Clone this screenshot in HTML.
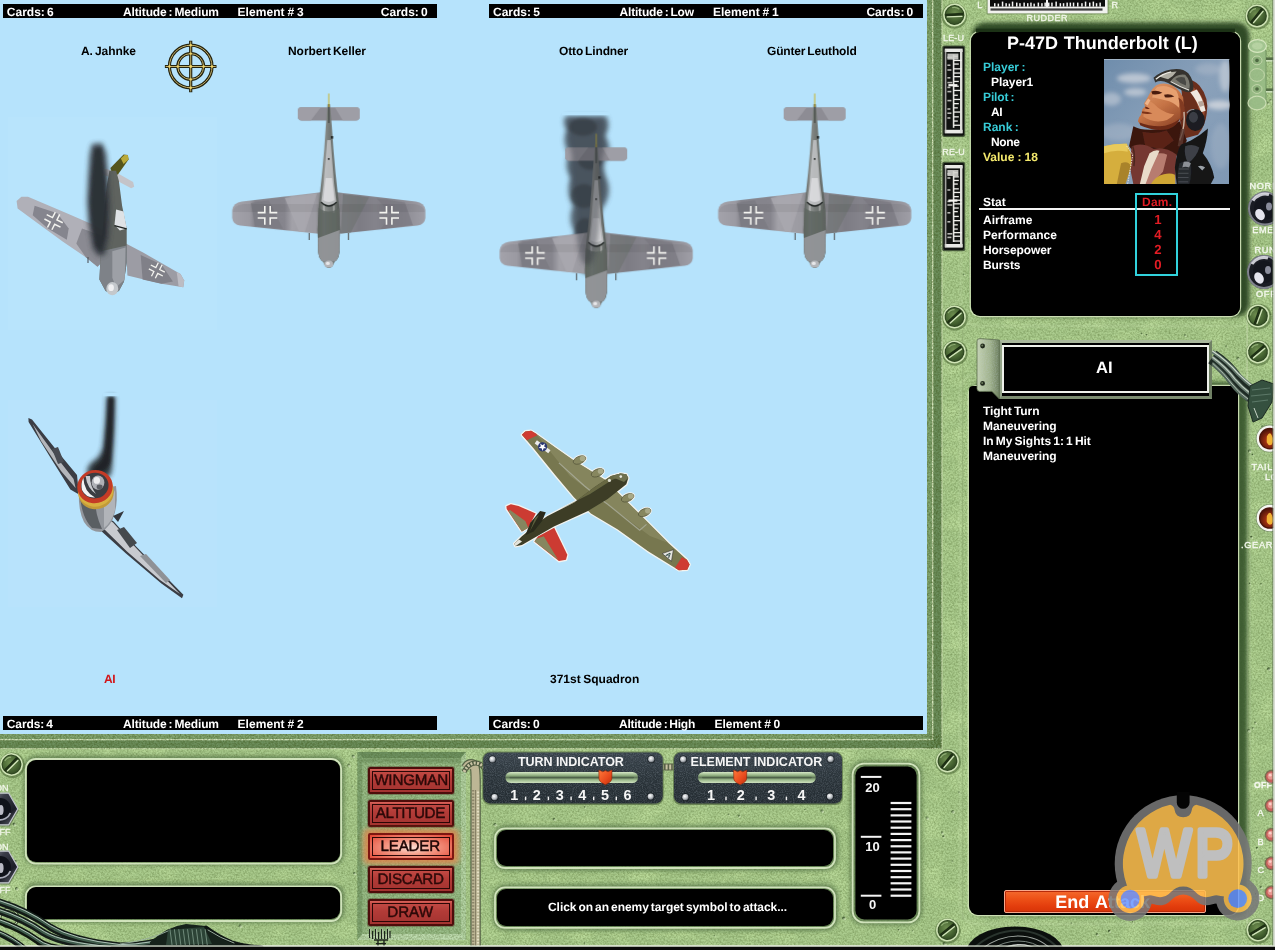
<!DOCTYPE html>
<html lang="en">
<head>
<meta charset="utf-8">
<title>Down in Flames - Attack</title>
<style>
html,body{margin:0;padding:0;background:#000;}
body{width:1275px;height:950px;overflow:hidden;font-family:"Liberation Sans",sans-serif;}
#root{position:relative;width:1275px;height:950px;overflow:hidden;background:#abcc8e;}
#root *{box-sizing:border-box;}
.abs{position:absolute;}
.bar,.name,.t,.btn,#endattack{will-change:transform;text-rendering:geometricPrecision;}
svg.layer{position:absolute;left:0;top:0;width:1275px;height:950px;pointer-events:none;}
/* ---------- sky / play field ---------- */
#sky{position:absolute;left:0;top:0;width:927px;height:734px;background:#b6e3fc;}
.bar{position:absolute;height:14px;background:#000;color:#fff;font-weight:bold;font-size:12px;line-height:14px;white-space:nowrap;}
.bar span{position:absolute;top:.6px;}
.name{position:absolute;font-weight:bold;font-size:12px;line-height:14px;color:#000;white-space:nowrap;}
/* ---------- screens ---------- */
.screen{position:absolute;background:#000;border-radius:9px;}
.t{position:absolute;font-weight:bold;font-size:12px;line-height:14px;white-space:nowrap;color:#fff;}
.cy{color:#37ccd8;}
.yl{color:#f3e86c;}
.rd{color:#e21c24;}
#endattack{border:1px solid #f9a88c;border-radius:2px;background:linear-gradient(#f46a2e 0,#ee5218 35%,#e23c0c 75%,#d63408 100%);box-shadow:inset 0 0 0 1px #b82a08;color:#fff;font-weight:bold;font-size:18px;line-height:21px;}
/* ---------- buttons ---------- */
.btn{position:absolute;left:368px;width:86px;height:27px;border:2px solid #4d0d0b;border-radius:2px;background:linear-gradient(#d9635a 0,#c24a44 12%,#b23b37 45%,#a33330 100%);color:#2c0908;font-size:15.2px;line-height:23px;-webkit-text-stroke:.45px #2c0908;box-shadow:0 0 0 1px rgba(70,40,30,.35);}
.btn i{position:absolute;left:2px;top:2px;right:2px;bottom:2px;border:1.4px solid #2a0706;}
.btn b{position:absolute;top:0;font-weight:normal;white-space:nowrap;}
.btn.on{background:radial-gradient(ellipse at 50% 55%,#fde0d6 0%,#f59a86 40%,#e2422f 100%);border-color:#7d1611;color:#1c0504;-webkit-text-stroke:.45px #1c0504;box-shadow:0 0 6px 3px rgba(226,120,60,.7);}
</style>
</head>
<body>
<div id="root">
<!-- =================== PLAY FIELD =================== -->
<div id="sky"></div>
<svg class="layer" id="gfx-bg" viewBox="0 0 1275 950">
<defs>
  <filter id="grain" x="0" y="0" width="100%" height="100%" color-interpolation-filters="sRGB">
    <feTurbulence type="fractalNoise" baseFrequency="0.55" numOctaves="3" seed="7" result="n"/>
    <feColorMatrix type="matrix" values="0 0 0 0 0.26  0 0 0 0 0.36  0 0 0 0 0.13  1.9 0 0 0 -0.62"/>
  </filter>
  <filter id="grainL" x="0" y="0" width="100%" height="100%" color-interpolation-filters="sRGB">
    <feTurbulence type="fractalNoise" baseFrequency="0.035 0.05" numOctaves="3" seed="21" result="n"/>
    <feColorMatrix type="matrix" values="0 0 0 0 0.80  0 0 0 0 0.92  0 0 0 0 0.66  0 2.2 0 0 -0.95"/>
  </filter>
  <filter id="b1"><feGaussianBlur stdDeviation="1"/></filter>
  <filter id="b2"><feGaussianBlur stdDeviation="2"/></filter>
  <filter id="b3"><feGaussianBlur stdDeviation="3.2"/></filter>
  <filter id="b05"><feGaussianBlur stdDeviation="0.5"/></filter>
  <radialGradient id="screwG" cx="0.42" cy="0.4" r="0.7">
    <stop offset="0" stop-color="#6f8e50"/><stop offset="0.55" stop-color="#4c6a36"/><stop offset="1" stop-color="#2e4620"/>
  </radialGradient>
  <g id="screw">
    <circle r="12.8" fill="#46622f" opacity=".55" transform="translate(.6 .8)"/>
    <circle r="11.4" fill="#d0e4b6"/>
    <circle r="9.9" fill="#2e4620"/>
    <circle r="8.9" fill="url(#screwG)"/>
    <path d="M-5.4,6 L4.6,-6.4" stroke="#1e3014" stroke-width="2.6" stroke-linecap="round"/>
    <path d="M-3.4,6.6 L6,-4.6" stroke="#d8eac0" stroke-width="1.4" stroke-linecap="round" opacity=".95"/>
    <path d="M-7,-3 A7.6,7.6 0 0 1 -1,-7.4" stroke="#a9c68c" stroke-width="1.2" fill="none" opacity=".7"/>
  </g>
  <linearGradient id="bevV" x1="0" y1="0" x2="0" y2="1">
    <stop offset="0" stop-color="#6f8a58"/><stop offset="1" stop-color="#d4e6bc"/>
  </linearGradient>
  <radialGradient id="knobG" cx="0.4" cy="0.38" r="0.65">
    <stop offset="0" stop-color="#1a1c26"/><stop offset="0.55" stop-color="#22242e"/><stop offset="0.8" stop-color="#8a8c98"/><stop offset="1" stop-color="#2a2c36"/>
  </radialGradient>
  <radialGradient id="lampG" cx="0.5" cy="0.6" r="0.6">
    <stop offset="0" stop-color="#e08828"/><stop offset="0.35" stop-color="#a03010"/><stop offset="1" stop-color="#4a130a"/>
  </radialGradient>
</defs>

<!-- base panel colour + texture -->
<rect x="0" y="0" width="1275" height="950" fill="#abcc8e"/>
<rect x="0" y="0" width="1275" height="950" filter="url(#grainL)" opacity=".55"/>
<rect x="0" y="0" width="1275" height="950" filter="url(#grain)" opacity=".36"/>

<!-- sky (repeated so the svg can sit above the html sky) -->
<rect x="0" y="0" width="927" height="734" fill="#b6e3fc"/>
<rect x="8" y="117" width="209" height="213" fill="#bfe7fd" opacity=".32"/>
<rect x="8" y="400" width="209" height="207" fill="#bfe7fd" opacity=".24"/>

<!-- frame around play field -->
<g>
  <rect x="927" y="0" width="15" height="749" fill="#84a672"/>
  <rect x="0" y="734" width="942" height="15" fill="#84a672"/>
  <rect x="933.4" y="0" width="8" height="748" fill="#6c8e5c"/>
  <rect x="0" y="740" width="941" height="8" fill="#6c8e5c"/>
  <rect x="932" y="0" width="1.3" height="740" fill="#d6e6be"/>
  <rect x="0" y="739" width="933" height="1.3" fill="#d6e6be"/>
  <rect x="941.3" y="0" width="1.2" height="749" fill="#c2d6a8"/>
  <rect x="0" y="748" width="942" height="1.2" fill="#c2d6a8"/>
  <rect x="927" y="0" width="15" height="749" filter="url(#grain)" opacity=".6"/>
  <rect x="0" y="734" width="942" height="15" filter="url(#grain)" opacity=".6"/>
</g>

<!-- vertical ridge lines on right panel -->
<rect x="1246.5" y="30" width="1.2" height="900" fill="#c9dcb0" opacity=".7"/>
<rect x="962" y="330" width="1.2" height="590" fill="#8aa66e" opacity=".5"/>

<!-- recessed bevels for the screens -->
<g fill="none">
  <!-- info screen -->
  <rect x="961" y="21" width="290" height="305" rx="17" stroke="#c8e0ae" stroke-width="2" opacity=".3" filter="url(#b1)"/>
  <rect x="972" y="22.5" width="277.5" height="294" rx="13" fill="#2a4420" filter="url(#b2)" opacity=".95"/>
  <rect x="970.2" y="31.4" width="270.4" height="285.2" rx="9.6" stroke="#d6e8be" stroke-width="1.2" opacity=".9"/>
  <rect x="976" y="28.6" width="259" height="4" fill="#1c3016" filter="url(#b05)"/>
  <!-- log screen -->
  <rect id="logrim" x="960" y="374" width="290" height="550" rx="17" stroke="#c8e0ae" stroke-width="2" opacity=".3" filter="url(#b1)"/>
  <rect x="972" y="382" width="275.5" height="534" rx="12" fill="#36522c" filter="url(#b2)" opacity=".9"/>
  <rect x="968.2" y="385.4" width="270.4" height="530.2" rx="9.6" stroke="#d6e8be" stroke-width="1.2" opacity=".9"/>
  <!-- bottom left screens -->
  <rect x="24" y="756" width="320" height="109" rx="12" fill="#4d6b40" filter="url(#b2)" opacity=".75"/>
  <rect x="25.8" y="759" width="315.4" height="104.6" rx="10" stroke="#dcecc6" stroke-width="1.8" opacity=".9"/>
  <rect x="24" y="883.6" width="320" height="39" rx="12" fill="#4d6b40" filter="url(#b2)" opacity=".75"/>
  <rect x="25.8" y="886.4" width="315.4" height="34.6" rx="10" stroke="#dcecc6" stroke-width="1.8" opacity=".9"/>
  <!-- bottom centre screens -->
  <rect x="493" y="825.6" width="345" height="45" rx="13" fill="#4d6b40" filter="url(#b2)" opacity=".75"/>
  <rect x="495" y="828.4" width="340" height="39.6" rx="10" stroke="#dcecc6" stroke-width="1.8" opacity=".9"/>
  <rect x="493" y="884.6" width="345" height="46" rx="13" fill="#4d6b40" filter="url(#b2)" opacity=".75"/>
  <rect x="495" y="887.4" width="340" height="40.4" rx="10" stroke="#dcecc6" stroke-width="1.8" opacity=".9"/>
  <!-- right gauge -->
  <rect x="850" y="761" width="72" height="164" rx="14" fill="#4d6b40" filter="url(#b2)" opacity=".7"/>
  <rect x="852.6" y="763.6" width="66.8" height="158.8" rx="11.4" stroke="#dcecc6" stroke-width="1.8" opacity=".9"/>
</g>

<!-- button well -->
<g>
  <rect x="357.5" y="752" width="108.5" height="188" fill="#8fb27e"/>
  <path d="M357.5,752 h108.5 l-5,6 h-98.5 z" fill="#6d9060"/>
  <path d="M357.5,752 v188 l5,-6 v-176 z" fill="#7fa270"/>
  <path d="M466,752 v188 l-5,-6 v-176 z" fill="#b4d3a4"/>
  <path d="M357.5,940 h108.5 l-5,-6 h-98.5 z" fill="#bddaae"/>
  <rect x="362.5" y="758" width="98.5" height="176" fill="#98bb87"/>
  <rect x="362.5" y="758" width="98.5" height="5" fill="#5f8052" opacity=".45" filter="url(#b1)"/>
  <rect x="357.5" y="752" width="108.5" height="188" filter="url(#grain)" opacity=".4"/>
  <rect x="363" y="829" width="96" height="35" rx="4" fill="#d9a06a" opacity=".55" filter="url(#b2)"/>
</g>

<!-- specks -->
<g>
<circle cx="348.6" cy="765.0" r="1.5" fill="#2c4420" opacity="0.5"/><circle cx="349.5" cy="766.1" r="1.4" fill="#dff0c8" opacity=".55"/>
<circle cx="1255.6" cy="893.7" r="0.7" fill="#2c4420" opacity="0.75"/><circle cx="1256.5" cy="894.8" r="0.6" fill="#dff0c8" opacity=".55"/>
<circle cx="1037.6" cy="378.1" r="1.2" fill="#2c4420" opacity="0.75"/><circle cx="1038.5" cy="379.2" r="1.1" fill="#dff0c8" opacity=".55"/>
<circle cx="952.1" cy="861.0" r="0.7" fill="#2c4420" opacity="0.6"/><circle cx="953.0" cy="862.1" r="0.6" fill="#dff0c8" opacity=".55"/>
<circle cx="1226.1" cy="346.0" r="0.8" fill="#2c4420" opacity="0.75"/><circle cx="1227.0" cy="347.1" r="0.7" fill="#dff0c8" opacity=".55"/>
<circle cx="584.7" cy="806.9" r="0.8" fill="#2c4420" opacity="0.6"/><circle cx="585.6" cy="808.0" r="0.7" fill="#dff0c8" opacity=".55"/>
<circle cx="843.7" cy="918.0" r="1.5" fill="#2c4420" opacity="0.75"/><circle cx="844.6" cy="919.1" r="1.4" fill="#dff0c8" opacity=".55"/>
<circle cx="494.9" cy="824.2" r="1.5" fill="#2c4420" opacity="0.6"/><circle cx="495.8" cy="825.3" r="1.4" fill="#dff0c8" opacity=".55"/>
<circle cx="1012.6" cy="357.2" r="1.2" fill="#2c4420" opacity="0.75"/><circle cx="1013.5" cy="358.3" r="1.1" fill="#dff0c8" opacity=".55"/>
<circle cx="952.7" cy="811.4" r="1.5" fill="#2c4420" opacity="0.6"/><circle cx="953.6" cy="812.5" r="1.4" fill="#dff0c8" opacity=".55"/>
<circle cx="1248.5" cy="730.2" r="1.5" fill="#2c4420" opacity="0.5"/><circle cx="1249.4" cy="731.3" r="1.4" fill="#dff0c8" opacity=".55"/>
<circle cx="354.3" cy="873.1" r="1.2" fill="#2c4420" opacity="0.6"/><circle cx="355.2" cy="874.2" r="1.1" fill="#dff0c8" opacity=".55"/>
<circle cx="958.9" cy="792.1" r="0.8" fill="#2c4420" opacity="0.6"/><circle cx="959.8" cy="793.2" r="0.7" fill="#dff0c8" opacity=".55"/>
<circle cx="1255.1" cy="722.4" r="1" fill="#2c4420" opacity="0.5"/><circle cx="1256.0" cy="723.5" r="0.9" fill="#dff0c8" opacity=".55"/>
<circle cx="1096.9" cy="934.2" r="1.2" fill="#2c4420" opacity="0.6"/><circle cx="1097.8" cy="935.3" r="1.1" fill="#dff0c8" opacity=".55"/>
<circle cx="1030.0" cy="934.1" r="1" fill="#2c4420" opacity="0.5"/><circle cx="1030.9" cy="935.2" r="0.9" fill="#dff0c8" opacity=".55"/>
<circle cx="1066.8" cy="358.7" r="1.5" fill="#2c4420" opacity="0.6"/><circle cx="1067.7" cy="359.8" r="1.4" fill="#dff0c8" opacity=".55"/>
<circle cx="1077.5" cy="351.7" r="0.8" fill="#2c4420" opacity="0.5"/><circle cx="1078.4" cy="352.8" r="0.7" fill="#dff0c8" opacity=".55"/>
<circle cx="1141.4" cy="333.4" r="0.8" fill="#2c4420" opacity="0.6"/><circle cx="1142.3" cy="334.5" r="0.7" fill="#dff0c8" opacity=".55"/>
<circle cx="1185.0" cy="335.1" r="1" fill="#2c4420" opacity="0.5"/><circle cx="1185.9" cy="336.2" r="0.9" fill="#dff0c8" opacity=".55"/>
<circle cx="945.1" cy="938.0" r="1" fill="#2c4420" opacity="0.6"/><circle cx="946.0" cy="939.1" r="0.9" fill="#dff0c8" opacity=".55"/>
<circle cx="898.4" cy="929.7" r="0.8" fill="#2c4420" opacity="0.75"/><circle cx="899.3" cy="930.8" r="0.7" fill="#dff0c8" opacity=".55"/>
<circle cx="912.3" cy="930.6" r="0.7" fill="#2c4420" opacity="0.5"/><circle cx="913.2" cy="931.7" r="0.6" fill="#dff0c8" opacity=".55"/>
<circle cx="1264.9" cy="530.5" r="0.8" fill="#2c4420" opacity="0.5"/><circle cx="1265.8" cy="531.6" r="0.7" fill="#dff0c8" opacity=".55"/>
<circle cx="1071.3" cy="923.0" r="0.7" fill="#2c4420" opacity="0.5"/><circle cx="1072.2" cy="924.1" r="0.6" fill="#dff0c8" opacity=".55"/>
<circle cx="966.4" cy="350.3" r="1" fill="#2c4420" opacity="0.75"/><circle cx="967.3" cy="351.4" r="0.9" fill="#dff0c8" opacity=".55"/>
<circle cx="996.3" cy="350.8" r="1" fill="#2c4420" opacity="0.6"/><circle cx="997.2" cy="351.9" r="0.9" fill="#dff0c8" opacity=".55"/>
<circle cx="1270.2" cy="99.9" r="1" fill="#2c4420" opacity="0.5"/><circle cx="1271.1" cy="101.0" r="0.9" fill="#dff0c8" opacity=".55"/>
<circle cx="1165.5" cy="370.8" r="1.2" fill="#2c4420" opacity="0.75"/><circle cx="1166.4" cy="371.9" r="1.1" fill="#dff0c8" opacity=".55"/>
<circle cx="213.9" cy="934.3" r="1.2" fill="#2c4420" opacity="0.6"/><circle cx="214.8" cy="935.4" r="1.1" fill="#dff0c8" opacity=".55"/>
<circle cx="1249.5" cy="583.2" r="0.7" fill="#2c4420" opacity="0.75"/><circle cx="1250.4" cy="584.3" r="0.6" fill="#dff0c8" opacity=".55"/>
<circle cx="1089.3" cy="347.1" r="0.8" fill="#2c4420" opacity="0.6"/><circle cx="1090.2" cy="348.2" r="0.7" fill="#dff0c8" opacity=".55"/>
<circle cx="51.8" cy="928.0" r="0.7" fill="#2c4420" opacity="0.5"/><circle cx="52.7" cy="929.1" r="0.6" fill="#dff0c8" opacity=".55"/>
<circle cx="1109.1" cy="930.9" r="1.2" fill="#2c4420" opacity="0.75"/><circle cx="1110.0" cy="932.0" r="1.1" fill="#dff0c8" opacity=".55"/>
<circle cx="1253.1" cy="468.7" r="0.8" fill="#2c4420" opacity="0.6"/><circle cx="1254.0" cy="469.8" r="0.7" fill="#dff0c8" opacity=".55"/>
<circle cx="1251.5" cy="20.1" r="1.5" fill="#2c4420" opacity="0.5"/><circle cx="1252.4" cy="21.2" r="1.4" fill="#dff0c8" opacity=".55"/>
<circle cx="980.5" cy="350.1" r="1.5" fill="#2c4420" opacity="0.6"/><circle cx="981.4" cy="351.2" r="1.4" fill="#dff0c8" opacity=".55"/>
<circle cx="353.0" cy="756.0" r="1.5" fill="#2c4420" opacity="0.6"/><circle cx="353.9" cy="757.1" r="1.4" fill="#dff0c8" opacity=".55"/>
<circle cx="1018.1" cy="922.6" r="0.7" fill="#2c4420" opacity="0.6"/><circle cx="1019.0" cy="923.7" r="0.6" fill="#dff0c8" opacity=".55"/>
<circle cx="14.1" cy="823.9" r="1.5" fill="#2c4420" opacity="0.75"/><circle cx="15.0" cy="825.0" r="1.4" fill="#dff0c8" opacity=".55"/>
<circle cx="584.5" cy="943.0" r="0.8" fill="#2c4420" opacity="0.6"/><circle cx="585.4" cy="944.1" r="0.7" fill="#dff0c8" opacity=".55"/>
<circle cx="16.5" cy="888.4" r="1.5" fill="#2c4420" opacity="0.75"/><circle cx="17.4" cy="889.5" r="1.4" fill="#dff0c8" opacity=".55"/>
<circle cx="9.4" cy="902.2" r="1.5" fill="#2c4420" opacity="0.6"/><circle cx="10.3" cy="903.3" r="1.4" fill="#dff0c8" opacity=".55"/>
<circle cx="1146.4" cy="334.8" r="0.8" fill="#2c4420" opacity="0.75"/><circle cx="1147.3" cy="335.9" r="0.7" fill="#dff0c8" opacity=".55"/>
<circle cx="29.0" cy="934.5" r="0.7" fill="#2c4420" opacity="0.6"/><circle cx="29.9" cy="935.6" r="0.6" fill="#dff0c8" opacity=".55"/>
<circle cx="1270.1" cy="409.5" r="1" fill="#2c4420" opacity="0.6"/><circle cx="1271.0" cy="410.6" r="0.9" fill="#dff0c8" opacity=".55"/>
<circle cx="476.7" cy="824.0" r="1.5" fill="#2c4420" opacity="0.6"/><circle cx="477.6" cy="825.1" r="1.4" fill="#dff0c8" opacity=".55"/>
<circle cx="1256.9" cy="847.8" r="1" fill="#2c4420" opacity="0.75"/><circle cx="1257.8" cy="848.9" r="0.9" fill="#dff0c8" opacity=".55"/>
<circle cx="1252.6" cy="20.5" r="1.2" fill="#2c4420" opacity="0.6"/><circle cx="1253.5" cy="21.6" r="1.1" fill="#dff0c8" opacity=".55"/>
<circle cx="1268.6" cy="668.7" r="1.5" fill="#2c4420" opacity="0.75"/><circle cx="1269.5" cy="669.8" r="1.4" fill="#dff0c8" opacity=".55"/>
<circle cx="943.2" cy="836.2" r="1" fill="#2c4420" opacity="0.75"/><circle cx="944.1" cy="837.3" r="0.9" fill="#dff0c8" opacity=".55"/>
<circle cx="728.4" cy="814.2" r="0.8" fill="#2c4420" opacity="0.6"/><circle cx="729.3" cy="815.3" r="0.7" fill="#dff0c8" opacity=".55"/>
<circle cx="1262.1" cy="426.3" r="1" fill="#2c4420" opacity="0.6"/><circle cx="1263.0" cy="427.4" r="0.9" fill="#dff0c8" opacity=".55"/>
<circle cx="1015.2" cy="355.8" r="1" fill="#2c4420" opacity="0.5"/><circle cx="1016.1" cy="356.9" r="0.9" fill="#dff0c8" opacity=".55"/>
<circle cx="1249.4" cy="450.8" r="1.5" fill="#2c4420" opacity="0.6"/><circle cx="1250.3" cy="451.9" r="1.4" fill="#dff0c8" opacity=".55"/>
<circle cx="1260.8" cy="887.1" r="1.2" fill="#2c4420" opacity="0.6"/><circle cx="1261.7" cy="888.2" r="1.1" fill="#dff0c8" opacity=".55"/>
<circle cx="987.5" cy="379.2" r="1.2" fill="#2c4420" opacity="0.5"/><circle cx="988.4" cy="380.3" r="1.1" fill="#dff0c8" opacity=".55"/>
<circle cx="201.7" cy="940.3" r="1.5" fill="#2c4420" opacity="0.75"/><circle cx="202.6" cy="941.4" r="1.4" fill="#dff0c8" opacity=".55"/>
<circle cx="1270.1" cy="314.3" r="0.7" fill="#2c4420" opacity="0.75"/><circle cx="1271.0" cy="315.4" r="0.6" fill="#dff0c8" opacity=".55"/>
<circle cx="204.9" cy="936.3" r="0.7" fill="#2c4420" opacity="0.5"/><circle cx="205.8" cy="937.4" r="0.6" fill="#dff0c8" opacity=".55"/>
<circle cx="15.3" cy="861.6" r="1.5" fill="#2c4420" opacity="0.75"/><circle cx="16.2" cy="862.7" r="1.4" fill="#dff0c8" opacity=".55"/>
<circle cx="1037.7" cy="944.0" r="0.7" fill="#2c4420" opacity="0.6"/><circle cx="1038.6" cy="945.1" r="0.6" fill="#dff0c8" opacity=".55"/>
<circle cx="1261.0" cy="583.8" r="0.8" fill="#2c4420" opacity="0.6"/><circle cx="1261.9" cy="584.9" r="0.7" fill="#dff0c8" opacity=".55"/>
<circle cx="927.0" cy="817.7" r="1.5" fill="#2c4420" opacity="0.5"/><circle cx="927.9" cy="818.8" r="1.4" fill="#dff0c8" opacity=".55"/>
<circle cx="1237.9" cy="358.3" r="1.5" fill="#2c4420" opacity="0.6"/><circle cx="1238.8" cy="359.4" r="1.4" fill="#dff0c8" opacity=".55"/>
<circle cx="714.2" cy="935.7" r="0.7" fill="#2c4420" opacity="0.5"/><circle cx="715.1" cy="936.8" r="0.6" fill="#dff0c8" opacity=".55"/>
<circle cx="553.9" cy="819.0" r="1.2" fill="#2c4420" opacity="0.6"/><circle cx="554.8" cy="820.1" r="1.1" fill="#dff0c8" opacity=".55"/>
<circle cx="1252.3" cy="454.4" r="0.8" fill="#2c4420" opacity="0.75"/><circle cx="1253.2" cy="455.5" r="0.7" fill="#dff0c8" opacity=".55"/>
<circle cx="804.8" cy="809.4" r="0.7" fill="#2c4420" opacity="0.6"/><circle cx="805.7" cy="810.5" r="0.6" fill="#dff0c8" opacity=".55"/>
<circle cx="944.1" cy="943.5" r="1.5" fill="#2c4420" opacity="0.75"/><circle cx="945.0" cy="944.6" r="1.4" fill="#dff0c8" opacity=".55"/>
<circle cx="1258.3" cy="40.6" r="1" fill="#2c4420" opacity="0.5"/><circle cx="1259.2" cy="41.7" r="0.9" fill="#dff0c8" opacity=".55"/>
<circle cx="1251.5" cy="96.8" r="1.2" fill="#2c4420" opacity="0.5"/><circle cx="1252.4" cy="97.9" r="1.1" fill="#dff0c8" opacity=".55"/>
<circle cx="1267.6" cy="469.7" r="0.7" fill="#2c4420" opacity="0.5"/><circle cx="1268.5" cy="470.8" r="0.6" fill="#dff0c8" opacity=".55"/>
<circle cx="352.2" cy="786.1" r="0.7" fill="#2c4420" opacity="0.75"/><circle cx="353.1" cy="787.2" r="0.6" fill="#dff0c8" opacity=".55"/>
<circle cx="1260.3" cy="189.5" r="0.8" fill="#2c4420" opacity="0.75"/><circle cx="1261.2" cy="190.6" r="0.7" fill="#dff0c8" opacity=".55"/>
<circle cx="240.0" cy="925.7" r="1.5" fill="#2c4420" opacity="0.6"/><circle cx="240.9" cy="926.8" r="1.4" fill="#dff0c8" opacity=".55"/>
<circle cx="738.9" cy="815.7" r="1.2" fill="#2c4420" opacity="0.5"/><circle cx="739.8" cy="816.8" r="1.1" fill="#dff0c8" opacity=".55"/>
<circle cx="1130.6" cy="370.7" r="0.7" fill="#2c4420" opacity="0.5"/><circle cx="1131.5" cy="371.8" r="0.6" fill="#dff0c8" opacity=".55"/>
<circle cx="960.7" cy="314.1" r="1.2" fill="#2c4420" opacity="0.6"/><circle cx="961.6" cy="315.2" r="1.1" fill="#dff0c8" opacity=".55"/>
<circle cx="1132.5" cy="921.8" r="0.7" fill="#2c4420" opacity="0.5"/><circle cx="1133.4" cy="922.9" r="0.6" fill="#dff0c8" opacity=".55"/>
<circle cx="942.0" cy="832.5" r="1.2" fill="#2c4420" opacity="0.5"/><circle cx="942.9" cy="833.6" r="1.1" fill="#dff0c8" opacity=".55"/>
<circle cx="1108.3" cy="348.5" r="1.5" fill="#2c4420" opacity="0.75"/><circle cx="1109.2" cy="349.6" r="1.4" fill="#dff0c8" opacity=".55"/>
<circle cx="1251.2" cy="536.8" r="1" fill="#2c4420" opacity="0.75"/><circle cx="1252.1" cy="537.9" r="0.9" fill="#dff0c8" opacity=".55"/>
<circle cx="476.2" cy="850.0" r="1.5" fill="#2c4420" opacity="0.6"/><circle cx="477.1" cy="851.1" r="1.4" fill="#dff0c8" opacity=".55"/>
<circle cx="821.9" cy="810.7" r="1.5" fill="#2c4420" opacity="0.6"/><circle cx="822.8" cy="811.8" r="1.4" fill="#dff0c8" opacity=".55"/>
<circle cx="1252.6" cy="727.9" r="1" fill="#2c4420" opacity="0.5"/><circle cx="1253.5" cy="729.0" r="0.9" fill="#dff0c8" opacity=".55"/>
<circle cx="963.7" cy="274.3" r="0.8" fill="#2c4420" opacity="0.5"/><circle cx="964.6" cy="275.4" r="0.7" fill="#dff0c8" opacity=".55"/>
<circle cx="476.1" cy="843.8" r="1.5" fill="#2c4420" opacity="0.75"/><circle cx="477.0" cy="844.9" r="1.4" fill="#dff0c8" opacity=".55"/>
<circle cx="1267.8" cy="102.8" r="1.2" fill="#2c4420" opacity="0.5"/><circle cx="1268.7" cy="103.9" r="1.1" fill="#dff0c8" opacity=".55"/>
<circle cx="184.8" cy="942.6" r="1.2" fill="#2c4420" opacity="0.5"/><circle cx="185.7" cy="943.7" r="1.1" fill="#dff0c8" opacity=".55"/>
</g>

<!-- screws -->
<use href="#screw" transform="translate(954.5 15) rotate(48)"/>
<use href="#screw" transform="translate(1257 16) rotate(0)"/>
<use href="#screw" transform="translate(954.5 317) rotate(8)"/>
<use href="#screw" transform="translate(1258 316) rotate(-20)"/>
<use href="#screw" transform="translate(954.5 352) rotate(15)"/>
<use href="#screw" transform="translate(1258 352) rotate(10)"/>
<use href="#screw" transform="translate(947.5 761) rotate(0)"/>
<use href="#screw" transform="translate(947.5 930) rotate(12)"/>
<use href="#screw" transform="translate(1258 930) rotate(20)"/>
<use href="#screw" transform="translate(11.5 764.5) rotate(5)"/>

<!-- bottom border -->
<rect x="0" y="945.4" width="1275" height="1.4" fill="#e8eee0"/>
<rect x="0" y="946.8" width="1275" height="3.2" fill="#0a0a0a"/>

</svg>
<div class="bar" style="left:3px;top:4px;width:434px;"><span style="left:3.8px;word-spacing:-1.20px;">Cards: 6</span><span style="left:120.0px;letter-spacing:-0.14px;word-spacing:-1.20px;">Altitude : Medium</span><span style="left:234.4px;letter-spacing:0.08px;word-spacing:-0.60px;">Element # 3</span><span style="left:377.8px;word-spacing:-1.20px;">Cards: 0</span></div>
<div class="bar" style="left:489px;top:4px;width:434px;"><span style="left:4.0px;word-spacing:-1.20px;">Cards: 5</span><span style="left:130.5px;letter-spacing:-0.18px;word-spacing:-1.20px;">Altitude : Low</span><span style="left:224.0px;word-spacing:-0.50px;">Element # 1</span><span style="left:377.4px;word-spacing:-1.20px;">Cards: 0</span></div>
<div class="bar" style="left:3px;top:716px;width:434px;"><span style="left:3.8px;letter-spacing:-0.11px;word-spacing:-1.20px;">Cards: 4</span><span style="left:120.0px;letter-spacing:-0.14px;word-spacing:-1.20px;">Altitude : Medium</span><span style="left:234.4px;letter-spacing:0.08px;word-spacing:-0.60px;">Element # 2</span></div>
<div class="bar" style="left:489px;top:716px;width:434px;"><span style="left:3.8px;word-spacing:-1.20px;">Cards: 0</span><span style="left:130.0px;letter-spacing:-0.24px;word-spacing:-1.20px;">Altitude : High</span><span style="left:225.4px;letter-spacing:0.06px;word-spacing:-0.70px;">Element # 0</span></div>
<div class="name" style="top:44px;left:81.0px;letter-spacing:-0.06px;word-spacing:-1.20px;">A. Jahnke</div>
<div class="name" style="top:44px;left:287.9px;letter-spacing:-0.06px;word-spacing:-1.20px;">Norbert Keller</div>
<div class="name" style="top:44px;left:558.5px;letter-spacing:-0.14px;word-spacing:-1.20px;">Otto Lindner</div>
<div class="name" style="top:44px;left:766.8px;letter-spacing:-0.17px;word-spacing:-1.20px;">Günter Leuthold</div>
<div class="name" style="top:671.8px;left:103.6px;letter-spacing:-0.40px;word-spacing:0.00px;color:#d2161a;">AI</div>
<div class="name" style="top:671.8px;left:550.0px;word-spacing:-0.80px;">371st Squadron</div>

<svg class="layer" id="gfx-planes" viewBox="0 0 1275 950">
<defs>
  <filter id="pb" x="-10%" y="-10%" width="120%" height="120%"><feGaussianBlur stdDeviation="0.55"/></filter>
  <filter id="sm" x="-50%" y="-20%" width="200%" height="140%"><feGaussianBlur stdDeviation="2.6"/></filter>
  <filter id="sm1" x="-50%" y="-20%" width="200%" height="140%"><feGaussianBlur stdDeviation="1.4"/></filter>
  <linearGradient id="fwWing" x1="0" y1="0" x2="1" y2="0">
    <stop offset="0" stop-color="#a4a3ab"/><stop offset="0.09" stop-color="#9b9aa2"/><stop offset="0.12" stop-color="#84838b"/>
    <stop offset="0.27" stop-color="#86858d"/><stop offset="0.31" stop-color="#a3a2a9"/><stop offset="0.43" stop-color="#9c9ba2"/>
    <stop offset="0.5" stop-color="#6c706e"/>
    <stop offset="0.57" stop-color="#8a8990"/><stop offset="0.66" stop-color="#7d7c84"/><stop offset="0.74" stop-color="#85848c"/>
    <stop offset="0.8" stop-color="#7f7e86"/><stop offset="0.9" stop-color="#8f8e96"/><stop offset="1" stop-color="#a09fa7"/>
  </linearGradient>
  <linearGradient id="fwFus" x1="0" y1="0" x2="1" y2="0">
    <stop offset="0" stop-color="#555a57"/><stop offset="0.3" stop-color="#8d918f"/><stop offset="0.5" stop-color="#777c79"/><stop offset="0.8" stop-color="#6a6f6c"/><stop offset="1" stop-color="#4a4f4c"/>
  </linearGradient>
  <g id="cross" fill="none" stroke="#f4f4f0" stroke-width="1.6">
    <path d="M-9.8,-2.7 H-2.7 V-9.4"/><path d="M9.8,-2.7 H2.7 V-9.4"/><path d="M-9.8,2.7 H-2.7 V9.4"/><path d="M9.8,2.7 H2.7 V9.4"/>
  </g>
  <!-- Fw 190 seen from above, nose pointing down. local origin: centre x, y = page y - 80 -->
  <g id="fw190">
    <g filter="url(#pb)">
      <!-- wings -->
      <path d="M-8,112.2 L-87,121.4 Q-95.6,122.6 -96.6,130 L-96.6,138 Q-95.8,144.6 -88.6,145.6 L-10,153.8 L10,153.8 L88.6,145.6 Q95.8,144.6 96.6,138 L96.6,130 Q95.6,122.6 87,121.4 L8,112.2 Z" fill="url(#fwWing)"/>
      <!-- camo patches -->
      <path d="M-44,118 L-12,113.5 L-24,152 L-30,151.5 Z" fill="#a9a8af" opacity=".85"/>
      <path d="M-78,123 L-60,120.2 L-46,148.8 L-74,146 Z" fill="#7b7a82" opacity=".8"/>
      <path d="M14,114 L40,117.6 L22,152.6 L12,153.6 Z" fill="#6f7374" opacity=".7"/>
      <path d="M48,118.6 L76,122.4 L84,145 L52,149 L62,134 Z" fill="#797880" opacity=".7"/>
      <path d="M-96,132 Q-96,126 -86,124 L86,124 Q96,126 96,132 Z" fill="#000" opacity=".06"/>
      <!-- tailplane -->
      <path d="M-28,27.3 H28 Q31,27.6 31,31 V37 Q30.6,40.3 27,40.5 H-27 Q-30.6,40.3 -31,37 V31 Q-31,27.6 -28,27.3 Z" fill="#8d8c94"/>
      <path d="M-31,31 V37 Q-30.6,40.3 -27,40.5 H-18 L-8,27.3 H-28 Q-31,27.6 -31,31Z" fill="#9f9ea6"/>
      <path d="M6,27.3 L14,40.5 H27 Q30.6,40.3 31,37 V31 Q31,27.6 28,27.3 Z" fill="#a3a2aa" opacity=".8"/>
      <!-- gun barrels -->
      <path d="M-19.6,153 v7 M19.6,153 v7" stroke="#5c6062" stroke-width="1.2"/>
      <!-- fuselage -->
      <path d="M-1.2,24 L1.2,24 L3,46 L4.6,69 L6.6,92 L8.6,111 L10.2,127 L11.2,150 L10.6,172 Q9.6,180 6,181.5 L4.6,184.5 Q3.4,187.8 0,188 Q-3.4,187.8 -4.6,184.5 L-6,181.5 Q-9.6,180 -10.6,172 L-11.2,150 L-10.2,127 L-8.6,111 L-6.6,92 L-4.6,69 L-3,46 Z" fill="url(#fwFus)"/>
      <!-- light spine / canopy -->
      <path d="M-1.6,60 L1.8,60 L5.2,104 L7.6,122 Q0,128 -7.6,122 L-5.2,104 Z" fill="#c9cacd" opacity=".8"/>
      <path d="M-3.2,98 L3.2,98 L5.6,120 Q0,124 -5.6,120 Z" fill="#e1e2e4" opacity=".75"/>
      <path d="M-7.8,122 Q0,130 7.8,122" fill="none" stroke="#1f2322" stroke-width="1.3"/>
      <path d="M-5,125.5 V133 M5,125.5 V133" stroke="#d8d8d8" stroke-width="1" opacity=".8"/>
      <!-- cowling -->
      <path d="M-10.4,128 Q0,135 10.4,128 L11.2,150 L10.6,172 Q9.6,180 6,181.5 H-6 Q-9.6,180 -10.6,172 L-11.2,150 Z" fill="#5f6662" opacity=".85"/>
      <path d="M-10.8,158 L10.8,150 L10.7,170 Q9.6,180 6,181.5 H-6 Q-9.6,180 -10.6,172 Z" fill="#9c9ea3" opacity=".8"/>
      <ellipse cx="0" cy="184" rx="4.4" ry="3.6" fill="#b4b6ba"/>
      <ellipse cx="-1" cy="183.4" rx="2" ry="1.6" fill="#e8e8ea"/>
      <!-- fin + antenna -->
      <path d="M0,24 V43" stroke="#505452" stroke-width="1.6"/>
      <path d="M0,13.6 V27" stroke="#c9b83a" stroke-width="1.1"/>
      <rect x="2" y="56" width="2.4" height="2.6" fill="#262a28"/>
      <rect x="-1" y="78" width="1.8" height="1.8" fill="#3a3e3c"/>
    </g>
    <use href="#cross" x="-61.3" y="135.3"/>
    <use href="#cross" x="60.4" y="135.3"/>
  </g>
</defs>

<!-- target marker -->
<g id="crosshair" transform="translate(190.7 66.5)" fill="none">
  <g stroke="#24220e" stroke-width="3.2">
    <circle r="21.3"/><circle r="12.9"/>
    <path d="M-25.8,0 H25.8 M0,-25.8 V25.8"/>
  </g>
  <g stroke="#c2b06a" stroke-width="1">
    <circle r="21.3"/><circle r="12.9"/>
    <path d="M-25,0 H25 M0,-25 V25"/>
  </g>
  <g fill="#f0d466"><circle r="1.4"/><circle cx="-12.9" r="1.2"/><circle cx="12.9" r="1.2"/><circle cy="-12.9" r="1.2"/><circle cy="12.9" r="1.2"/><circle cx="-21.3" r="1.2"/><circle cx="21.3" r="1.2"/><circle cy="-21.3" r="1.2"/><circle cy="21.3" r="1.2"/></g>
</g>

<!-- ============ plane 2 : Norbert Keller ============ -->
<use href="#fw190" x="328.8" y="80"/>
<!-- ============ plane 4 : Günter Leuthold ============ -->
<use href="#fw190" x="814.7" y="80"/>
<!-- ============ plane 3 : Otto Lindner (smoking) ============ -->
<g id="smoke3">
  <g filter="url(#sm)" opacity=".78" fill="#414a52">
    <path id="smk3" d="M566,116 H606 Q612,126 604,136 Q613,146 607,158 Q600,166 605,176 Q613,190 605,204 Q597,214 601,226 Q605,240 597,254 L593,272 Q583,278 578,264 Q571,246 575,232 Q567,220 573,206 Q565,192 571,178 Q563,166 569,154 Q561,140 567,130 Q561,122 566,116 Z"/>
  </g>
  <g filter="url(#sm1)" opacity=".5" fill="#2b3035">
    <ellipse cx="583" cy="127" rx="14" ry="9"/><ellipse cx="590" cy="160" rx="12" ry="10"/><ellipse cx="584" cy="196" rx="13" ry="12"/><ellipse cx="585" cy="232" rx="10" ry="14"/><ellipse cx="586" cy="260" rx="7" ry="12"/>
  </g>
</g>
<use href="#fw190" x="596.2" y="120.2"/>
<g filter="url(#sm)" opacity=".42" fill="#30363c">
  <path d="M568,118 H604 Q608,140 602,160 Q608,190 600,210 Q600,240 592,262 Q584,270 580,256 Q574,230 576,204 Q568,180 572,156 Q566,136 568,118 Z"/>
</g>
<rect x="562" y="112" width="48" height="3.2" fill="#b6e3fc"/>

<!-- ============ plane 1 : A. Jahnke (banking Fw 190) ============ -->
<g id="plane1">
  <g filter="url(#pb)">
    <path d="M104.7,168.8 L113.2,170.7 L133.1,182.1 L134.2,186.8 L131.2,188.3 L112.3,178.3 L104.3,175.1 Z" fill="#c4c4c9"/>
    <path d="M110.4,167.9 L123.6,154.6 L127.8,155.0 L128.6,159.5 L118.3,173.9 L113.2,177.3 Z" fill="#54541f"/>
    <path d="M120.8,158.4 L124.4,155.0 L127.8,155.0 L128.6,159.5 L123.6,164.1 Z" fill="#b9aa3a"/>
    <path d="M16.6,201.0 L21.4,196.7 L28.0,196.7 L66.8,213.3 L93.3,224.7 L102.8,230.4 L101.7,262.6 L97.5,266.7 L85.8,257.3 L63.0,241.7 L34.6,220.9 L17.6,208.6 Z" fill="#b0b0b8"/>
    <path d="M34.6,205.8 L57.3,213.3 L68.7,228.5 L66.8,239.8 L47.9,228.5 L32.7,215.2 Z" fill="#85858e"/>
    <path d="M82.0,228.5 L102.8,236.1 L101.7,262.6 L97.5,266.7 L85.8,257.3 L76.3,243.6 Z" fill="#8a8a92"/>
    <path d="M125.9,243.6 L142.6,252.2 L180.5,273.9 L184.2,280.6 L183.3,287.2 L161.5,283.8 L127.4,275.5 Z" fill="#9c9ca4"/>
    <path d="M140.7,255.0 L161.5,264.5 L172.9,281.5 L161.5,283.8 L142.6,279.6 Z" fill="#808088"/>
    <path d="M176.7,272.0 L180.5,273.9 L184.2,280.6 L183.3,287.2 L178.6,286.4 Z" fill="#bcbcc3"/>
    <path d="M109.4,170.7 L116.1,170.7 L118.9,181.1 L122.1,205.8 L126.7,228.5 L126.7,262.6 L124.0,281.5 L118.9,291.0 L112.3,294.4 L105.6,291.0 L99.4,279.6 L100.5,258.8 L102.8,228.5 L104.7,205.8 L106.6,186.8 Z" fill="#5e645e"/>
    <path d="M100.9,251.2 L126.7,245.5 L126.7,262.6 L124.0,281.5 L118.9,291.0 L105.6,291.0 L99.4,279.6 Z" fill="#7e8288"/>
    <path d="M112.3,251.2 L125.5,247.4 L124.8,279.6 L116.1,287.2 L112.3,277.7 Z" fill="#a2a6ac" opacity=".85"/>
    <path d="M116.1,209.5 L123.6,211.4 L126.7,228.5 L119.8,230.4 L114.5,224.7 Z" fill="#dfe2e5"/>
    <path d="M114.5,225.6 L126.7,228.9" stroke="#1e2220" stroke-width="1.5"/>
    <ellipse cx="112.3" cy="288.7" rx="6" ry="6.6" fill="#c4c8cc"/>
    <ellipse cx="111.1" cy="287.7" rx="2.8" ry="3.4" fill="#f0f0f2"/>
    <path d="M88.0,256.9 v6" stroke="#50545a" stroke-width="1.1"/>
  </g>
  <g transform="translate(53.6 220.9) rotate(27)"><use href="#cross" transform="scale(.92)"/></g>
  <g transform="translate(156.8 270.5) rotate(27)"><use href="#cross" transform="scale(.8)"/></g>
  <g filter="url(#sm)" fill="#383e44" opacity=".9"><path d="M91.8,144.0 L102.0,142.9 L106.2,152.7 L108.5,177.3 L110.4,205.8 L109.2,236.1 L105.5,254.2 L98.6,256.5 L92.6,248.9 L88.4,224.7 L86.9,202.0 L88.0,177.3 L89.5,154.6 Z"/></g>
  <g filter="url(#sm1)" fill="#24282c" opacity=".7"><path d="M94.5,148.9 L101.3,147.4 L104.7,177.3 L107.0,205.8 L105.8,236.1 L100.9,252.7 L95.2,245.5 L91.4,220.9 L90.3,202.0 L91.8,177.3 Z"/></g>
</g>

<!-- ============ P-47 (AI) ============ -->
<g id="p47">
  <g filter="url(#sm)" fill="#2c3034" opacity=".94">
    <path d="M106.8,396 H115 Q115,430 112.4,460 Q112.4,470 110,476 Q100,481 88,477 Q85,468 92,462 Q101,457 103,446 Q106,420 106.8,396 Z"/>
  </g>
  <g filter="url(#sm1)" fill="#1a1d20" opacity=".8">
    <path d="M108.2,397 H113.8 Q113.6,430 110.6,462 Q106,474 94,473 Q92,468 98,464 Q104,458 105,448 Q107.4,426 108.2,397 Z"/>
  </g>
  <rect x="103" y="393" width="16" height="3.2" fill="#b6e3fc"/>
  <g filter="url(#pb)">
    <!-- left wing -->
    <path d="M28.4,418 L32,419.4 L60.4,455 L77,475 L79,494.4 L70.4,489.4 L49.8,456.4 L28.6,422 Z" fill="#3a3e44"/>
    <path d="M32.6,424 L57.6,458.6 L73.6,479 L75.6,488 L61,471 L41,441 Z" fill="#b4b6bb"/>
    <path d="M52,449 L58,447 L64,462 L58,464 Z" fill="#484c52"/>
    <!-- right wing -->
    <path d="M99.8,512.6 L113.7,521.5 L136.4,546.8 L183.4,594.8 L182,598.2 L161.4,583.4 L126,553.4 L100.6,530.4 Z" fill="#3a3e44"/>
    <path d="M101,514.6 L113,522.6 L135.6,547.6 L180,594 L160,580 L127,551.6 L103,528 Z" fill="#c8cacf"/>
    <path d="M117,530 L124,527 L137,543 L130,548 Z" fill="#44484e"/>
    <path d="M140,556 L146,554 L170,580 L166,583 Z" fill="#8e9196"/>
    <!-- fuselage / belly -->
    <path d="M79,492 Q78,510 84,522 Q90,532 101,532 Q112,526 115,512 Q118,500 116,486 Z" fill="#92969c"/>
    <path d="M80,496 Q82,518 92,528 L102,529 Q95,514 95,498 Z" fill="#5a5e64"/>
    <path d="M104,500 Q112,498 115,490 L115,510 Q112,522 104,528 Z" fill="#b9bcc1" opacity=".8"/>
    <path d="M113,516 L124,511 L118,522 Z" fill="#34383e"/>
    <!-- cowl -->
    <ellipse cx="96" cy="492.6" rx="17.8" ry="16.6" fill="#c29a38" transform="rotate(-12 96 492.6)"/>
    <ellipse cx="95.6" cy="490" rx="17.8" ry="16.6" fill="#d8b040" transform="rotate(-12 95.6 490)"/>
    <ellipse cx="95" cy="486.6" rx="17.8" ry="16.6" fill="#c43a28" transform="rotate(-12 95 486.6)"/>
    <ellipse cx="94.8" cy="485.6" rx="13.8" ry="12.8" fill="#3a3c42" transform="rotate(-12 94.8 485.6)"/>
    <path d="M83.4,478 Q84,492 95,497.4 Q86,498 82,490 Q80.6,483 83.4,478 Z" fill="#f4f4f4"/>
    <path d="M85.6,476 Q87,488 96,494 Q90,486 90,476 Z" fill="#c8cace"/>
    <ellipse cx="98" cy="482.6" rx="6.4" ry="7.2" fill="#aeb0b6"/>
    <ellipse cx="96.8" cy="480.4" rx="3.2" ry="3.4" fill="#eeeef0"/>
    <ellipse cx="99.6" cy="487" rx="3" ry="2.4" fill="#5a5c62"/>
  </g>
</g>

<!-- ============ B-17 (371st Squadron) ============ -->
<g id="b17">
  <g filter="url(#pb)">
    <g fill="#f4f4f0" stroke="#f4f4f0" stroke-width="2.6" stroke-linejoin="round">
      <path d="M521.9,434.8 L525.3,431.4 L531.1,430.8 L535.7,433.5 L555.6,447.8 L572.4,459.6 L607.7,481.4 L617.8,492.4 L644.8,519.3 L668.4,542.9 L686.9,559.7 L689.6,564.4 L687.2,569.8 L678.8,570.2 L648.1,551.3 L617.8,529.4 L590.9,513.4 L574.1,497.4 L555.6,475.6 L533.7,448.6 Z"/>
      <path d="M628.3,478.1 L626.3,474.2 L620.4,473.5 L611.1,475.9 L594.3,487.3 L574.1,502.5 L547.1,516.3 L540.4,521.0 L521.9,536.2 L514.3,543.7 L515.5,546.3 L521.9,544.9 L553.9,526.4 L587.5,511.2 L607.7,499.1 L626.3,484.3 Z"/>
      <path d="M506.4,506.2 L510.9,504.2 L518.5,505.9 L535.7,513.6 L528.3,527.7 L521.9,531.4 L506.7,508.9 Z"/>
      <path d="M537.9,536.5 L554.2,527.7 L567.3,554.7 L566.0,559.7 L558.9,561.1 L534.5,541.5 Z"/>
      <ellipse cx="579.5" cy="460" rx="6.6" ry="3.6" transform="rotate(-24 579.5 460)"/>
      <ellipse cx="597.5" cy="472.8" rx="6.6" ry="3.6" transform="rotate(-24 597.5 472.8)"/>
      <ellipse cx="627.6" cy="497.8" rx="6.6" ry="3.6" transform="rotate(-24 627.6 497.8)"/>
      <ellipse cx="644.6" cy="512.4" rx="6.6" ry="3.6" transform="rotate(-24 644.6 512.4)"/>
    </g>
    <!-- main wing -->
    <path d="M521.9,434.8 L525.3,431.4 L531.1,430.8 L535.7,433.5 L555.6,447.8 L572.4,459.6 L607.7,481.4 L617.8,492.4 L644.8,519.3 L668.4,542.9 L686.9,559.7 L689.6,564.4 L687.2,569.8 L678.8,570.2 L648.1,551.3 L617.8,529.4 L590.9,513.4 L574.1,497.4 L555.6,475.6 L533.7,448.6 Z" fill="#77774f"/>
    <path d="M535.7,433.5 L555.6,447.8 L572.4,459.6 L607.7,481.4 L617.8,492.4 L668.4,542.9 L650,536 L610,506 L570,476 Z" fill="#8b8b64" opacity=".7"/>
    <!-- wing tips red -->
    <path d="M521.9,434.8 L525.3,431.4 L531.1,430.8 L535.7,433.5 L537.4,435.2 L526.9,440.2 Z" fill="#cf3a30"/>
    <path d="M681.8,557.2 L686.9,559.7 L689.6,564.4 L687.2,569.8 L678.8,570.2 L675.1,567.8 Z" fill="#cf3a30"/>
    <!-- panel lines -->
    <path d="M558.9,462.9 L584.2,485.7 L602.7,500.8 L607.7,504.2 L639.7,530.3 L646.5,524.4" fill="none" stroke="#a9ab9a" stroke-width="1.2" opacity=".85"/>
    <!-- engines -->
    <g fill="#87875f" stroke="#55553a" stroke-width=".7">
      <ellipse cx="579.5" cy="460" rx="6.6" ry="3.6" transform="rotate(-24 579.5 460)"/>
      <ellipse cx="597.5" cy="472.8" rx="6.6" ry="3.6" transform="rotate(-24 597.5 472.8)"/>
      <ellipse cx="627.6" cy="497.8" rx="6.6" ry="3.6" transform="rotate(-24 627.6 497.8)"/>
      <ellipse cx="644.6" cy="512.4" rx="6.6" ry="3.6" transform="rotate(-24 644.6 512.4)"/>
    </g>
    <g fill="#a9a988">
      <ellipse cx="582.6" cy="458.4" rx="2.8" ry="2.6"/><ellipse cx="600.6" cy="471.2" rx="2.8" ry="2.6"/><ellipse cx="630.8" cy="496.2" rx="2.8" ry="2.6"/><ellipse cx="647.8" cy="510.8" rx="2.8" ry="2.6"/>
    </g>
    <!-- tailplane -->
    <path d="M506.4,506.2 L510.9,504.2 L518.5,505.9 L535.7,513.6 L528.3,527.7 L521.9,531.4 L506.7,508.9 Z" fill="#cc3a30"/>
    <path d="M537.9,536.5 L554.2,527.7 L567.3,554.7 L566.0,559.7 L558.9,561.1 L534.5,541.5 Z" fill="#cc3a30"/>
    <path d="M510.1,510.1 L525.3,521.0 L528.3,527.7 L521.9,531.4 L508.4,510.9 Z" fill="#86865e"/>
    <path d="M536.2,538.7 L543.8,536.2 L558.1,559.7 L534.5,541.5 Z" fill="#86865e"/>
    <!-- fuselage -->
    <path d="M628.3,478.1 L626.3,474.2 L620.4,473.5 L611.1,475.9 L594.3,487.3 L574.1,502.5 L547.1,516.3 L540.4,521.0 L521.9,536.2 L514.3,543.7 L515.5,546.3 L521.9,544.9 L553.9,526.4 L587.5,511.2 L607.7,499.1 L626.3,484.3 Z" fill="#3c3e27"/>
    <path d="M626.3,474.2 L620.4,473.5 L611.1,475.9 L594.3,487.3 L574.1,502.5 L560,509 L590,494 L612,480 Z" fill="#6b6d47" opacity=".9"/>
    <path d="M612,477 L620.4,473.5 L626.3,474.2 L628.3,478.1 L624,482 Z" fill="#6f7150"/>
    <circle cx="620.8" cy="476.6" r="1.3" fill="#ecece4"/>
    <circle cx="609.4" cy="480.4" r="1.6" fill="#ecece4" opacity=".9"/>
    <!-- fin -->
    <path d="M540.1,510.9 L545.8,512.3 L542.1,521.0 L533.7,531.4 L525.3,535.2 L530.3,522.7 Z" fill="#2a2c1b"/>
    <path d="M535,518 L539,515 L530,531 Z" fill="#5c5e3e"/>
    <path d="M514.3,543.7 L519,539.6 L522,541.6 L515.5,546.3 Z" fill="#e4e4dc"/>
  </g>
  <!-- star insignia -->
  <g transform="translate(542.6 446.8) rotate(36)">
    <rect x="-8.4" y="-1.9" width="16.8" height="3.8" fill="#ececec"/>
    <circle r="4.6" fill="#2a3772"/>
    <path d="M0,-4 L1.1,-1.2 L4,-1.2 L1.7,.6 L2.5,3.4 L0,1.7 L-2.5,3.4 L-1.7,.6 L-4,-1.2 L-1.1,-1.2 Z" fill="#fff"/>
  </g>
  <!-- group marking -->
  <g transform="translate(669.4 554.4) rotate(40)">
    <path d="M0,-6.2 L6,4 L-6,4 Z" fill="#e6e6e0" stroke="#2b2b2b" stroke-width=".5"/>
    <text x="0" y="3.3" font-family="'Liberation Sans',sans-serif" font-weight="bold" font-size="7" text-anchor="middle" fill="#2f4a48">A</text>
  </g>
</g>

</svg>

<!-- =================== RIGHT PANEL =================== -->
<div class="screen" id="info" style="left:971px;top:32px;width:269px;height:284px;"></div>
<div class="t" style="top:33px;font-size:18px;line-height:20px;left:1006.8px;word-spacing:0.85px;">P-47D Thunderbolt (L)</div>
<div class="t cy" style="top:60px;left:982.6px;word-spacing:-0.90px;">Player :</div>
<div class="t " style="top:75px;left:990.8px;letter-spacing:-0.07px;word-spacing:0.00px;">Player1</div>
<div class="t cy" style="top:90px;left:982.6px;letter-spacing:-0.12px;word-spacing:-1.20px;">Pilot :</div>
<div class="t " style="top:105px;left:990.8px;letter-spacing:-0.40px;word-spacing:0.00px;">AI</div>
<div class="t cy" style="top:120px;left:982.6px;word-spacing:-1.00px;">Rank :</div>
<div class="t " style="top:135px;left:990.8px;letter-spacing:-0.40px;word-spacing:0.00px;">None</div>
<div class="t yl" style="top:149.6px;left:982.6px;word-spacing:-0.20px;">Value : 18</div>
<div class="t " style="top:194.8px;left:982.6px;word-spacing:0.00px;">Stat</div>
<div class="t rd" style="top:194.8px;left:1142.3px;letter-spacing:0.23px;word-spacing:0.00px;">Dam.</div>
<div class="t " style="top:213px;left:982.6px;word-spacing:0.00px;">Airframe</div>
<div class="t " style="top:228.2px;left:982.6px;letter-spacing:0.06px;word-spacing:0.00px;">Performance</div>
<div class="t " style="top:243.3px;left:982.6px;letter-spacing:-0.10px;word-spacing:0.00px;">Horsepower</div>
<div class="t " style="top:258.3px;left:982.6px;letter-spacing:-0.10px;word-spacing:0.00px;">Bursts</div>
<div class="abs" style="left:979.4px;top:208.4px;width:250.4px;height:2px;background:#f4f4f4;"></div>
<div class="abs" style="left:1135.2px;top:192.8px;width:43px;height:83px;border:2px solid #31d2dc;"></div>
<div class="t rd" style="left:1152.6px;top:212.6px;width:10px;text-align:center;font-size:13.2px;">1</div>
<div class="t rd" style="left:1152.6px;top:227.8px;width:10px;text-align:center;font-size:13.2px;">4</div>
<div class="t rd" style="left:1152.6px;top:242.9px;width:10px;text-align:center;font-size:13.2px;">2</div>
<div class="t rd" style="left:1152.6px;top:257.9px;width:10px;text-align:center;font-size:13.2px;">0</div>

<div class="screen" id="log" style="left:969px;top:386px;width:269px;height:529px;border-radius:4px 4px 9px 9px;"></div>
<div class="abs" id="aibox" style="left:998.6px;top:340.2px;width:213.4px;height:59px;background:#000;border:3px solid #8a9c80;border-color:#a9b89c #6f8064 #7c8d70 #93a488;"></div>
<div class="abs" style="left:1001.6px;top:344.6px;width:207.4px;height:48.6px;border:2px solid #eef1ea;"></div>
<div class="t" style="top:358.6px;font-size:16.5px;line-height:18px;left:1096.0px;word-spacing:0.00px;">AI</div>
<div class="t" style="top:404px;left:982.6px;letter-spacing:-0.06px;word-spacing:-1.20px;">Tight Turn</div>
<div class="t" style="top:419.2px;left:982.6px;letter-spacing:-0.04px;word-spacing:0.00px;">Maneuvering</div>
<div class="t" style="top:434.2px;left:982.6px;letter-spacing:-0.03px;word-spacing:-1.12px;">In My Sights 1: 1 Hit</div>
<div class="t" style="top:449.2px;left:982.6px;letter-spacing:-0.04px;word-spacing:0.00px;">Maneuvering</div>

<div class="abs" id="endattack" style="left:1003.6px;top:890.4px;width:202px;height:22.6px;"><span style="position:absolute;top:0.6px;white-space:nowrap;left:50.3px;word-spacing:1.40px;">End Attack</span></div>

<!-- =================== BOTTOM PANEL =================== -->
<div class="screen" style="left:27.4px;top:760px;width:312.6px;height:101.6px;"></div>
<div class="screen" style="left:27.4px;top:887.4px;width:312.6px;height:31.6px;"></div>
<div class="screen" style="left:497px;top:830px;width:336px;height:35.8px;"></div>
<div class="screen" style="left:497px;top:889px;width:336px;height:36.6px;"></div>
<div class="t" style="top:900px;left:548.0px;letter-spacing:-0.06px;word-spacing:-1.20px;">Click on an enemy target symbol to attack...</div>

<div class="btn" style="top:767px;"><i></i><b style="left:4.2px;letter-spacing:-0.17px;">WINGMAN</b></div>
<div class="btn" style="top:800px;"><i></i><b style="left:5.8px;letter-spacing:-0.40px;">ALTITUDE</b></div>
<div class="btn on" style="top:833px;"><i></i><b style="left:10.6px;letter-spacing:-0.24px;">LEADER</b></div>
<div class="btn" style="top:866.2px;"><i></i><b style="left:7.4px;letter-spacing:-0.30px;">DISCARD</b></div>
<div class="btn" style="top:899px;"><i></i><b style="left:17.2px;letter-spacing:0.00px;">DRAW</b></div>

<svg class="layer" id="gfx-fg" viewBox="0 0 1275 950">
<defs>
  <clipPath id="pclip"><rect x="30" y="30" width="878" height="875"/></clipPath>
  <linearGradient id="pSky" x1="0" y1="0" x2="1" y2="1">
    <stop offset="0" stop-color="#6f8dac"/><stop offset="0.5" stop-color="#8aa1ba"/><stop offset="1" stop-color="#7f98b4"/>
  </linearGradient>
  <linearGradient id="pSkin" x1="0.2" y1="0" x2="0.8" y2="1">
    <stop offset="0" stop-color="#dd9868"/><stop offset="0.5" stop-color="#c67446"/><stop offset="1" stop-color="#8e4426"/>
  </linearGradient>
  <filter id="pbl" x="-5%" y="-5%" width="110%" height="110%"><feGaussianBlur stdDeviation="4"/></filter>
  <filter id="pbl2" x="-20%" y="-20%" width="140%" height="140%"><feGaussianBlur stdDeviation="16"/></filter>
  <filter id="pbl3" x="-20%" y="-20%" width="140%" height="140%"><feGaussianBlur stdDeviation="8"/></filter>
</defs>
<!-- pilot portrait -->
<g id="portrait" transform="translate(1104 59) scale(0.14237 0.142857) translate(-30 -30)" clip-path="url(#pclip)">
  <rect x="30" y="30" width="878" height="875" fill="url(#pSky)"/>
  <g filter="url(#pbl2)" fill="#c6ced8">
    <ellipse cx="240" cy="165" rx="120" ry="34" opacity=".85"/>
    <ellipse cx="250" cy="262" rx="80" ry="28" opacity=".8"/>
    <ellipse cx="80" cy="310" rx="70" ry="46" opacity=".6"/>
    <ellipse cx="840" cy="352" rx="90" ry="32" opacity="1"/>
    <ellipse cx="880" cy="150" rx="40" ry="110" opacity=".7"/>
    <ellipse cx="760" cy="100" rx="90" ry="40" opacity=".3"/>
    <ellipse cx="130" cy="540" rx="130" ry="60" opacity=".3"/>
    <ellipse cx="850" cy="640" rx="70" ry="160" opacity=".22"/>
  </g>
  <g filter="url(#pbl)">
    <!-- helmet -->
    <path d="M560,190 Q640,150 700,215 Q770,300 752,410 Q742,500 690,560 L600,585 Q556,520 568,430 Q600,330 560,190 Z" fill="#6a2e1e"/>
    <path d="M610,205 Q700,236 732,330 Q748,400 722,470 Q702,400 682,340 Q650,260 610,205 Z" fill="#9a4c30"/>
    <path d="M560,300 Q600,360 590,440 L570,470 Q590,380 560,300 Z" fill="#4a1c12"/>
    <!-- white strap -->
    <path d="M636,262 L682,244 Q722,300 744,392 L712,402 Q690,330 636,262 Z" fill="#efe7df"/>
    <path d="M690,330 L724,322 L734,356 L702,366 Z" fill="#b9a69a"/>
    <!-- collar / neck shadow -->
    <path d="M236,500 Q300,536 420,520 L562,468 L612,600 L560,704 L420,724 L256,704 L206,640 Z" fill="#3a1810"/>
    <path d="M300,540 Q380,560 470,530 L520,600 L440,660 L320,640 Z" fill="#5a2418"/>
    <!-- shirt / tie -->
    <path d="M226,640 Q300,610 380,660 Q460,640 540,700 L530,905 L236,905 L206,760 Z" fill="#743830"/>
    <path d="M380,700 Q430,680 474,700 L444,820 L364,905 L300,905 Z" fill="#b77c70"/>
    <path d="M350,690 Q390,660 420,672 L362,800 L322,905 L282,905 L312,780 Z" fill="#e9dcca"/>
    <!-- face -->
    <path d="M395,215 Q440,188 510,214 Q560,246 586,300 Q596,380 572,440 Q530,492 430,516 L340,506 L286,490 L268,466 L276,440 L290,420 L296,400 L300,380 L318,362 L312,340 L336,300 L350,274 Q366,236 395,215 Z" fill="url(#pSkin)"/>
    <path d="M404,226 Q470,204 538,252 Q566,300 556,372 Q520,328 460,318 Q400,304 368,300 Q376,250 404,226 Z" fill="#e6a070"/>
    <path d="M340,320 Q372,330 410,372 Q470,416 524,416 Q484,466 410,468 Q350,462 306,432 Q306,400 324,366 Z" fill="#d88a5a"/>
    <path d="M316,342 L340,306 L356,318 L336,356 Z" fill="#efb48a"/>
    <path d="M280,474 Q340,498 420,500 Q500,498 566,444 Q544,498 480,522 Q380,540 284,494 Z" fill="#6c2a18"/>
    <path d="M362,258 Q398,244 440,266 Q412,282 370,276 Z" fill="#4a1c10"/>
    <path d="M452,280 Q492,268 524,292 Q492,304 458,298 Z" fill="#4a1c10"/>
    <path d="M296,398 Q330,394 370,410 Q338,420 298,410 Z" fill="#7c3018"/>
    <path d="M322,362 Q340,366 352,380 Q336,382 318,374 Z" fill="#6c2814"/>
    <path d="M552,300 Q598,320 598,400 Q590,450 560,472 Q580,400 552,300 Z" fill="#823a22"/>
    <!-- goggles -->
    <path d="M378,162 Q420,120 500,104 Q580,90 622,130 Q662,180 658,242 Q640,272 600,260 Q540,232 480,198 Q430,172 390,194 Z" fill="#34322e"/>
    <path d="M418,152 Q470,120 540,118 Q520,150 480,172 Q450,162 418,152 Z" fill="#b1afa4"/>
    <path d="M500,182 Q540,130 600,140 Q640,180 630,238 Q580,232 500,182 Z" fill="#7a796f"/>
    <path d="M530,170 Q560,150 596,160 Q610,190 606,216 Q566,204 530,170 Z" fill="#4a4944"/>
    <path d="M394,172 Q440,132 502,120" stroke="#eeece4" stroke-width="9" fill="none"/>
    <path d="M498,188 Q560,224 628,248" stroke="#dedcd4" stroke-width="8" fill="none"/>
    <!-- ear cup -->
    <ellipse cx="672" cy="458" rx="66" ry="76" fill="#1a1c20"/>
    <ellipse cx="658" cy="438" rx="32" ry="38" fill="#3a3e44"/>
    <path d="M612,410 Q630,380 664,384" stroke="#8a8e94" stroke-width="8" fill="none"/>
    <path d="M592,400 Q602,500 562,600" stroke="#d8ccbc" stroke-width="10" fill="none" opacity=".85"/>
    <path d="M570,520 L600,520 L580,640 L548,640 Z" fill="#5c3a30" opacity=".8"/>
    <!-- oxygen mask + hose -->
    <path d="M540,905 L528,790 Q540,680 570,630 L640,600 Q700,570 760,516 Q756,600 724,690 Q790,770 804,860 L780,905 Z" fill="#131518"/>
    <path d="M600,640 Q660,620 700,650 Q680,720 620,760 Q590,700 600,640 Z" fill="#3c4046"/>
    <path d="M560,760 Q600,740 640,760 Q650,830 630,905 L550,905 Q540,830 560,760 Z" fill="#26292d"/>
    <path d="M590,750 Q620,740 640,760 L628,790 Q600,780 580,790 Z" fill="#8c9096"/>
    <path d="M690,780 Q720,770 740,790 L720,810 Z" fill="#9ca2a8"/>
    <path d="M556,800 h70 M552,830 h72 M550,860 h74 M552,890 h70" stroke="#4a4e54" stroke-width="7" fill="none"/>
    <!-- life vest -->
    <path d="M30,640 Q110,622 190,624 Q230,680 220,780 Q200,850 180,905 L30,905 Z" fill="#d5ae3e"/>
    <path d="M30,640 Q110,622 190,624 Q200,650 196,680 Q110,660 30,690 Z" fill="#e8ca5c"/>
    <path d="M150,760 Q200,740 220,780 L180,905 L120,905 Z" fill="#a9832c"/>
    <path d="M360,905 Q390,850 450,836 Q500,826 528,840 L530,905 Z" fill="#cfa636"/>
    <path d="M190,640 L232,700 L196,905" stroke="#ece8dc" stroke-width="7" stroke-dasharray="10 8" fill="none"/>
    <path d="M232,640 Q250,700 240,780" stroke="#3a2018" stroke-width="10" fill="none" opacity=".7"/>
  </g>
  <rect x="30" y="30" width="878" height="7" fill="#b8c4d2" opacity=".7"/>
</g>
<defs>
<linearGradient id="plateG" x1="0" y1="0" x2="0" y2="1"><stop offset="0" stop-color="#39434b"/><stop offset="0.5" stop-color="#2a3339"/><stop offset="1" stop-color="#242c32"/></linearGradient>
<radialGradient id="rivG" cx="0.4" cy="0.35" r="0.7"><stop offset="0" stop-color="#ffffff"/><stop offset="0.6" stop-color="#b9bdc2"/><stop offset="1" stop-color="#5a6066"/></radialGradient>
<linearGradient id="slotG" x1="0" y1="0" x2="0" y2="1"><stop offset="0" stop-color="#d6e8c6"/><stop offset="0.3" stop-color="#93b183"/><stop offset="0.5" stop-color="#62795a"/><stop offset="0.72" stop-color="#9dba8d"/><stop offset="1" stop-color="#cfe2bf"/></linearGradient>
<linearGradient id="ptrG" x1="0" y1="0" x2="1" y2="1"><stop offset="0" stop-color="#ff7a3a"/><stop offset="0.6" stop-color="#e8491c"/><stop offset="1" stop-color="#b8300c"/></linearGradient>
<linearGradient id="hexG" x1="0" y1="0" x2="1" y2="1"><stop offset="0" stop-color="#b0b2be"/><stop offset="0.35" stop-color="#3a3c48"/><stop offset="0.7" stop-color="#1c1e28"/><stop offset="1" stop-color="#6a6c78"/></linearGradient>
<linearGradient id="brkG" x1="0" y1="0" x2="1" y2="0"><stop offset="0" stop-color="#c4d2b2"/><stop offset="0.6" stop-color="#9fb18c"/><stop offset="1" stop-color="#6c7e5e"/></linearGradient>
<filter id="fb1" x="-20%" y="-20%" width="140%" height="140%"><feGaussianBlur stdDeviation="0.6"/></filter>
<filter id="fb2" x="-20%" y="-20%" width="140%" height="140%"><feGaussianBlur stdDeviation="1.5"/></filter>
<filter id="pgrain" x="0" y="0" width="100%" height="100%" color-interpolation-filters="sRGB"><feTurbulence type="fractalNoise" baseFrequency="0.9" numOctaves="2" seed="11"/><feColorMatrix type="matrix" values="0 0 0 0 0.75  0 0 0 0 0.8  0 0 0 0 0.85  1.6 0 0 0 -0.62"/><feComposite in2="SourceGraphic" operator="in"/></filter>
<g id="rivet"><circle r="4" fill="#12181c" opacity=".7"/><circle r="3.1" fill="url(#rivG)"/></g>
<g id="ptr"><path d="M-6.6,-7 Q-6.8,-7.6 -5.4,-7 L-2.6,-5.6 L0,-6.8 L2.6,-5.6 L5.4,-7 Q6.8,-7.6 6.6,-7 L6.4,1.6 Q6,4 3.6,5.4 L0,7.4 L-3.6,5.4 Q-6,4 -6.4,1.6 Z" fill="url(#ptrG)" stroke="#8a2408" stroke-width=".6"/></g>
<g id="knob"><circle r="17" fill="#1a1c24"/><circle r="16" fill="none" stroke="#9a9ca8" stroke-width="2" opacity=".8"/><circle r="11" fill="#14161e"/><path d="M-12,-8 A14.5,14.5 0 0 1 4,-14" stroke="#e8e8f0" stroke-width="3" fill="none" opacity=".85"/><ellipse cx="-5" cy="6" rx="4.4" ry="6" fill="#e4e4ee" transform="rotate(-30 -5 6)"/><ellipse cx="4" cy="-2" rx="3" ry="4" fill="#8a8c9c"/></g>
<g id="lamp"><circle r="14" fill="#62785a" opacity=".6"/><circle r="13.2" fill="#f6f6f2"/><circle r="10.8" fill="#4a130a"/><circle r="9.6" fill="url(#lampG)"/><path d="M-3,-2 Q0,-8 2,-3 Q5,2 2,6 Q-1,8 -3,4 Z" fill="#f6b838" opacity=".95"/></g>
<g id="led"><circle r="7" fill="#5a2a26" opacity=".55"/><circle r="5.6" fill="#c8605c"/><circle cx="-.6" cy="-.6" r="3.4" fill="#e89890"/><circle cx="-1.4" cy="-1.6" r="1.4" fill="#fbd0c8"/></g>

</defs>
<g id="rudder">
<rect x="986.6" y="-2" width="122" height="16.4" fill="#6c8652" opacity=".8"/>
<rect x="987.6" y="-2" width="120" height="15.4" fill="#f1f1ee"/>
<rect x="990" y="-2" width="115" height="8.6" fill="#0c0c0c"/>
<rect x="990.5" y="8.4" width="112" height="2.2" fill="#1a1a1a" opacity=".85"/>
<rect x="994.0" y="3.2" width="1.5" height="3.4" fill="#f4f4f4"/>
<rect x="997.6" y="3.6" width="1.5" height="3" fill="#f4f4f4"/>
<rect x="1001.8" y="1.6" width="1.5" height="5" fill="#f4f4f4"/>
<rect x="1005.4" y="3.2" width="1.5" height="3.4" fill="#f4f4f4"/>
<rect x="1008.6" y="3.6" width="1.5" height="3" fill="#f4f4f4"/>
<rect x="1011.8" y="1.6" width="1.5" height="5" fill="#f4f4f4"/>
<rect x="1016.0" y="2.6" width="1.5" height="4" fill="#f4f4f4"/>
<rect x="1019.2" y="3.2" width="1.5" height="3.4" fill="#f4f4f4"/>
<rect x="1023.4" y="2.6" width="1.5" height="4" fill="#f4f4f4"/>
<rect x="1027.0" y="3.2" width="1.5" height="3.4" fill="#f4f4f4"/>
<rect x="1030.2" y="2.6" width="1.5" height="4" fill="#f4f4f4"/>
<rect x="1033.4" y="3.6" width="1.5" height="3" fill="#f4f4f4"/>
<rect x="1037.6" y="2.6" width="1.5" height="4" fill="#f4f4f4"/>
<rect x="1041.2" y="3.2" width="1.5" height="3.4" fill="#f4f4f4"/>
<rect x="1044.4" y="2.6" width="1.5" height="4" fill="#f4f4f4"/>
<rect x="1048.0" y="2.6" width="1.5" height="4" fill="#f4f4f4"/>
<rect x="1051.2" y="2.6" width="1.5" height="4" fill="#f4f4f4"/>
<rect x="1055.4" y="1.6" width="1.5" height="5" fill="#f4f4f4"/>
<rect x="1059.6" y="3.2" width="1.5" height="3.4" fill="#f4f4f4"/>
<rect x="1062.8" y="3.2" width="1.5" height="3.4" fill="#f4f4f4"/>
<rect x="1066.4" y="2.6" width="1.5" height="4" fill="#f4f4f4"/>
<rect x="1069.6" y="2.6" width="1.5" height="4" fill="#f4f4f4"/>
<rect x="1072.8" y="2.6" width="1.5" height="4" fill="#f4f4f4"/>
<rect x="1077.0" y="2.6" width="1.5" height="4" fill="#f4f4f4"/>
<rect x="1081.2" y="3.2" width="1.5" height="3.4" fill="#f4f4f4"/>
<rect x="1084.8" y="1.6" width="1.5" height="5" fill="#f4f4f4"/>
<rect x="1089.0" y="2.6" width="1.5" height="4" fill="#f4f4f4"/>
<rect x="1092.6" y="1.6" width="1.5" height="5" fill="#f4f4f4"/>
<rect x="1095.8" y="3.2" width="1.5" height="3.4" fill="#f4f4f4"/>
<rect x="1099.4" y="2.6" width="1.5" height="4" fill="#f4f4f4"/>
<rect x="1046" y="-2" width="2" height="9" fill="#f4f4f4"/>
<text x="1047.2" y="21.4" font-family="'Liberation Sans',sans-serif" font-size="9" text-anchor="middle" fill="#f2f7ea" stroke="#f2f7ea" stroke-width=".3" letter-spacing=".5">RUDDER</text>
<text x="977.2" y="8.2" font-family="'Liberation Sans',sans-serif" font-size="9" fill="#f2f7ea" stroke="#f2f7ea" stroke-width=".3">L</text>
<text x="1111.4" y="8.2" font-family="'Liberation Sans',sans-serif" font-size="9" fill="#f2f7ea" stroke="#f2f7ea" stroke-width=".3">R</text>
</g>
<g>
<text x="953.6" y="41" font-family="'Liberation Sans',sans-serif" font-size="9" text-anchor="middle" fill="#f2f7ea" stroke="#f2f7ea" stroke-width=".3" letter-spacing=".2">LE-U</text>
<rect x="942.1999999999999" y="45.4" width="23" height="91.60000000000001" rx="2" fill="#46583a"/>
<rect x="943.4" y="46.6" width="20.6" height="89.2" rx="1.4" fill="#111311"/>
<rect x="944.8" y="48.6" width="17.8" height="3.4" fill="#e9e9e6"/>
<rect x="944.8" y="129.8" width="17.8" height="3.6" fill="#e9e9e6"/>
<rect x="960.0" y="49.6" width="2.4" height="83.2" fill="#dcdcd8"/>
<rect x="944.8" y="49.6" width="1.6" height="83.2" fill="#c8c8c4" opacity=".8"/>
<rect x="952.8" y="54.6" width="1.6" height="73.2" fill="#e4e4e0"/>
<rect x="953.8" y="55.6" width="4" height="1.3" fill="#f0f0ec"/>
<rect x="947.4" y="56.6" width="5" height="1.6" fill="#b8b8b4"/>
<rect x="953.8" y="59.8" width="8" height="1.3" fill="#f0f0ec"/>
<rect x="953.8" y="63.4" width="5" height="1.3" fill="#f0f0ec"/>
<rect x="947.4" y="64.4" width="3" height="1.6" fill="#b8b8b4"/>
<rect x="953.8" y="68.2" width="8" height="1.3" fill="#f0f0ec"/>
<rect x="947.4" y="69.2" width="4" height="1.6" fill="#b8b8b4"/>
<rect x="953.8" y="72.4" width="6.5" height="1.3" fill="#f0f0ec"/>
<rect x="953.8" y="76.0" width="6.5" height="1.3" fill="#f0f0ec"/>
<rect x="947.4" y="77.0" width="3" height="1.6" fill="#b8b8b4"/>
<rect x="953.8" y="80.8" width="5" height="1.3" fill="#f0f0ec"/>
<rect x="947.4" y="81.8" width="5" height="1.6" fill="#b8b8b4"/>
<rect x="953.8" y="85.6" width="5" height="1.3" fill="#f0f0ec"/>
<rect x="947.4" y="86.6" width="3" height="1.6" fill="#b8b8b4"/>
<rect x="953.8" y="89.8" width="8" height="1.3" fill="#f0f0ec"/>
<rect x="947.4" y="90.8" width="4" height="1.6" fill="#b8b8b4"/>
<rect x="953.8" y="94.6" width="4" height="1.3" fill="#f0f0ec"/>
<rect x="953.8" y="98.8" width="6.5" height="1.3" fill="#f0f0ec"/>
<rect x="947.4" y="99.8" width="4" height="1.6" fill="#b8b8b4"/>
<rect x="953.8" y="103.0" width="5" height="1.3" fill="#f0f0ec"/>
<rect x="953.8" y="107.2" width="4" height="1.3" fill="#f0f0ec"/>
<rect x="947.4" y="108.2" width="3" height="1.6" fill="#b8b8b4"/>
<rect x="953.8" y="111.4" width="6.5" height="1.3" fill="#f0f0ec"/>
<rect x="947.4" y="112.4" width="4" height="1.6" fill="#b8b8b4"/>
<rect x="953.8" y="116.2" width="5" height="1.3" fill="#f0f0ec"/>
<rect x="947.4" y="117.2" width="3" height="1.6" fill="#b8b8b4"/>
<rect x="953.8" y="120.4" width="4" height="1.3" fill="#f0f0ec"/>
<rect x="953.8" y="124.6" width="6.5" height="1.3" fill="#f0f0ec"/>
<rect x="947.4" y="53.6" width="11" height="6" fill="#d0d0cc" opacity=".9"/>
<rect x="948.4" y="84.1" width="9" height="2.2" fill="#f4f4f0"/>
</g>
<g>
<text x="953.6" y="154.6" font-family="'Liberation Sans',sans-serif" font-size="9" text-anchor="middle" fill="#f2f7ea" stroke="#f2f7ea" stroke-width=".3" letter-spacing=".2">RE-U</text>
<rect x="942.1999999999999" y="161.8" width="23" height="89.4" rx="2" fill="#46583a"/>
<rect x="943.4" y="163" width="20.6" height="87" rx="1.4" fill="#111311"/>
<rect x="944.8" y="165" width="17.8" height="3.4" fill="#e9e9e6"/>
<rect x="944.8" y="244" width="17.8" height="3.6" fill="#e9e9e6"/>
<rect x="960.0" y="166" width="2.4" height="81" fill="#dcdcd8"/>
<rect x="944.8" y="166" width="1.6" height="81" fill="#c8c8c4" opacity=".8"/>
<rect x="952.8" y="171" width="1.6" height="71" fill="#e4e4e0"/>
<rect x="953.8" y="172.0" width="4" height="1.3" fill="#f0f0ec"/>
<rect x="947.4" y="173.0" width="3" height="1.6" fill="#b8b8b4"/>
<rect x="953.8" y="176.2" width="5" height="1.3" fill="#f0f0ec"/>
<rect x="947.4" y="177.2" width="3" height="1.6" fill="#b8b8b4"/>
<rect x="953.8" y="179.8" width="5" height="1.3" fill="#f0f0ec"/>
<rect x="953.8" y="183.4" width="4" height="1.3" fill="#f0f0ec"/>
<rect x="953.8" y="188.2" width="5" height="1.3" fill="#f0f0ec"/>
<rect x="947.4" y="189.2" width="3" height="1.6" fill="#b8b8b4"/>
<rect x="953.8" y="191.8" width="6.5" height="1.3" fill="#f0f0ec"/>
<rect x="953.8" y="196.0" width="5" height="1.3" fill="#f0f0ec"/>
<rect x="953.8" y="199.6" width="8" height="1.3" fill="#f0f0ec"/>
<rect x="947.4" y="200.6" width="3" height="1.6" fill="#b8b8b4"/>
<rect x="953.8" y="203.2" width="8" height="1.3" fill="#f0f0ec"/>
<rect x="947.4" y="204.2" width="5" height="1.6" fill="#b8b8b4"/>
<rect x="953.8" y="207.4" width="5" height="1.3" fill="#f0f0ec"/>
<rect x="953.8" y="211.0" width="4" height="1.3" fill="#f0f0ec"/>
<rect x="947.4" y="212.0" width="3" height="1.6" fill="#b8b8b4"/>
<rect x="953.8" y="215.8" width="5" height="1.3" fill="#f0f0ec"/>
<rect x="953.8" y="220.0" width="6.5" height="1.3" fill="#f0f0ec"/>
<rect x="947.4" y="221.0" width="3" height="1.6" fill="#b8b8b4"/>
<rect x="953.8" y="224.2" width="4" height="1.3" fill="#f0f0ec"/>
<rect x="953.8" y="228.4" width="4" height="1.3" fill="#f0f0ec"/>
<rect x="953.8" y="232.0" width="8" height="1.3" fill="#f0f0ec"/>
<rect x="947.4" y="233.0" width="5" height="1.6" fill="#b8b8b4"/>
<rect x="953.8" y="235.6" width="6.5" height="1.3" fill="#f0f0ec"/>
<rect x="947.4" y="236.6" width="4" height="1.6" fill="#b8b8b4"/>
<rect x="953.8" y="240.4" width="6.5" height="1.3" fill="#f0f0ec"/>
<rect x="947.4" y="170" width="11" height="6" fill="#d0d0cc" opacity=".9"/>
<rect x="948.4" y="199.5" width="9" height="2.2" fill="#f4f4f0"/>
</g>
<g id="hinge" opacity=".9">
<rect x="1249" y="46" width="17" height="62" rx="6" fill="#97bb86"/>
<rect x="1249" y="46" width="17" height="62" rx="6" fill="none" stroke="#6f9260" stroke-width="1"/>
<rect x="1266" y="57.4" width="9" height="2.6" fill="#4c6440"/><rect x="1266" y="60" width="9" height="1.6" fill="#cfe2be"/>
<rect x="1266" y="88.4" width="9" height="2.6" fill="#4c6440"/><rect x="1266" y="91" width="9" height="1.6" fill="#cfe2be"/>
<ellipse cx="1257.4" cy="46" rx="9" ry="6.4" fill="#a4c693" stroke="#dcebc6" stroke-width="1.2"/>
<ellipse cx="1257.4" cy="46" rx="5.4" ry="3.4" fill="#b8d4a6"/>
<ellipse cx="1257" cy="60.4" rx="5" ry="4.4" fill="#8cb07c" stroke="#c8dab0" stroke-width="1"/><circle cx="1257" cy="60.4" r="1.8" fill="#46603c"/>
<ellipse cx="1257" cy="75" rx="7.4" ry="6.4" fill="#9abc88" stroke="#c8dab0" stroke-width="1"/>
<ellipse cx="1257" cy="89" rx="5" ry="4.4" fill="#8cb07c" stroke="#c8dab0" stroke-width="1"/><circle cx="1257" cy="89" r="1.8" fill="#46603c"/>
<ellipse cx="1257" cy="103" rx="9" ry="6.8" fill="#9abc88" stroke="#cfe0b8" stroke-width="1.2"/>
</g>
<g font-family="'Liberation Sans',sans-serif" font-size="9.2" fill="#f4f8ee" stroke="#f4f8ee" stroke-width=".35" letter-spacing=".7">
<text x="1249.4" y="188.6">NORM</text><text x="1252.2" y="232.6">EMER</text><text x="1254.4" y="253.2">RUN</text><text x="1256" y="297.2">OFF</text>
<text x="1251.6" y="469.8">TAIL</text><text x="1265" y="479.6">LO</text><text x="1241" y="547.6">.GEAR</text>
<text x="1254" y="787.6" font-weight="bold" font-size="8.6" letter-spacing=".3">OFF</text><text x="1257.6" y="815.6">A</text><text x="1257.6" y="844.8">B</text><text x="1257.6" y="873.2">C</text><text x="1257.6" y="901.2">D</text>
</g>
<use href="#knob" x="1265" y="208.6"/><use href="#knob" x="1264" y="272"/>
<use href="#lamp" x="1269.8" y="438.6"/><use href="#lamp" x="1269.8" y="518"/>
<use href="#led" x="1271.6" y="776.8"/>
<use href="#led" x="1271.6" y="805.6"/>
<use href="#led" x="1271.6" y="834.8"/>
<use href="#led" x="1271.6" y="863.2"/>
<use href="#led" x="1271.6" y="892.4"/>
<g id="bracket">
<path d="M977,341 Q977,338.6 980,338.6 L999.4,340 V399 L992,391.4 H979.6 Q977,391.2 977,388.6 Z" fill="url(#brkG)" stroke="#5a6c4c" stroke-width=".8"/>
<rect x="977.6" y="339.4" width="21" height="52" fill="#fff" filter="url(#pgrain)" opacity=".35"/>
<circle cx="982.6" cy="346" r="2.4" fill="#20281c"/><circle cx="982.6" cy="383.4" r="2.4" fill="#20281c"/>
<circle cx="982.2" cy="345.6" r="1" fill="#6a7a5a"/><circle cx="982.2" cy="383" r="1" fill="#6a7a5a"/>
</g>
<g id="cableR" fill="none" stroke-linecap="butt">
<path d="M1212.4,357 Q1226,366 1235,379 Q1242,388 1252,396" stroke="#1e2a24" stroke-width="15"/>
<path d="M1212.4,351.6 Q1228,362 1238,374 Q1246,382 1254,388" stroke="#5f7468" stroke-width="3.6"/>
<path d="M1212.4,351 Q1228,361.4 1238,373.4 Q1246,381.4 1254,387.4" stroke="#d0dcd0" stroke-width="1.2"/>
<path d="M1212.4,357.4 Q1226,367.6 1235,379.6 Q1242,387.6 1250,393.6" stroke="#6a7e72" stroke-width="3.6"/>
<path d="M1212.4,357 Q1226,367 1235,379 Q1242,387 1250,393" stroke="#c4d0c4" stroke-width="1.1"/>
<path d="M1212.4,363.6 Q1224,373.6 1232,384.6 Q1238,392.6 1248,399.6" stroke="#54685c" stroke-width="3.6"/>
<path d="M1212.4,363 Q1224,373 1232,384 Q1238,392 1248,399" stroke="#b4c0b4" stroke-width="1"/>
</g>
<path d="M1250,386 L1262,380 L1274,384 L1272,402 L1262,418 L1253,422 L1248,406 Z" fill="#35503f" stroke="#1c2a22" stroke-width="1"/>
<path d="M1252,390 L1270,388 M1251,396 L1271,394 M1252,402 L1268,400" stroke="#5c7868" stroke-width="1.2"/>
<path d="M1254,408 L1258,418" stroke="#c8d4c8" stroke-width="1"/>
<g id="rope" fill="none">
<path d="M466,768 Q469,763 474,765 Q476,768 475.6,790 V946" stroke="#4e5a40" stroke-width="10.4" opacity=".9"/>
<path d="M466,768 Q469,763 474,765 Q476,768 475.6,790 V946" stroke="#bdb695" stroke-width="8"/>
<path d="M473.2,790 V946" stroke="#8a8468" stroke-width="2.2" stroke-dasharray="1.6 1.6"/>
<path d="M478,790 V946" stroke="#e4dfc4" stroke-width="2.2" stroke-dasharray="1.6 1.6" stroke-dashoffset="1.6"/>
<path d="M475.6,790 V946" stroke="#5e5a44" stroke-width=".8" opacity=".8"/>
<path d="M464,772 Q470,760 480,764 Q486,768 485,776" stroke="#4e5a40" stroke-width="5"/>
<path d="M464,772 Q470,760 480,764 Q486,768 485,776" stroke="#c9c3a4" stroke-width="3" stroke-dasharray="2 1.4"/>
<path d="M662,767 H675" stroke="#5a6248" stroke-width="7"/><path d="M662,767 H675" stroke="#c9c3a4" stroke-width="5" stroke-dasharray="2 1.6"/>
</g>
<g id="comb" stroke="#1c241a" stroke-width="1.2" fill="none"><path d="M369.6,929 v9 M372.6,931 v8 M375.6,929 v10 M378.6,932 v7 M381.6,929 v10 M384.6,931 v8 M387.6,929 v10 M390,931 v7"/><path d="M374,940 h14 M376,943.6 h10 M378,940 v6 M384,940 v6" stroke-width="1.4"/></g>
<g stroke="#e4ecd8" stroke-width=".7" fill="none" opacity=".8"><path d="M370.6,929 v8 M376.6,929 v9 M382.6,929 v9 M388.6,929 v9"/></g>
<g>
<rect x="482.2" y="751.6" width="181.50000000000006" height="53.4" rx="8" fill="#5c7448" opacity=".8" filter="url(#fb1)"/>
<rect x="483.2" y="752.4" width="179.50000000000006" height="51" rx="7" fill="url(#plateG)"/>
<rect x="483.2" y="752.4" width="179.50000000000006" height="51" rx="7" fill="#fff" filter="url(#pgrain)" opacity=".3"/>
<use href="#rivet" x="492.4" y="759.4"/>
<use href="#rivet" x="651.3" y="759.2"/>
<use href="#rivet" x="494.6" y="797.2"/>
<use href="#rivet" x="650.7" y="796.6"/>
<text x="570.9" y="765.6" font-family="'Liberation Sans',sans-serif" font-weight="bold" font-size="12.5" text-anchor="middle" fill="#f6f6f6" textLength="106" lengthAdjust="spacing">TURN INDICATOR</text>
<rect x="505.4" y="772" width="132.60000000000002" height="11" rx="5.5" fill="url(#slotG)"/>
<rect x="509.4" y="776.8" width="124.60000000000002" height="1.6" rx=".8" fill="#2c382a" opacity=".35"/>
<use href="#ptr" x="605.4" y="777.4"/>
<text x="514.2" y="799.6" font-family="'Liberation Sans',sans-serif" font-weight="bold" font-size="14.4" text-anchor="middle" fill="#f6f6f6">1</text>
<rect x="524.9" y="796.6" width="1.4" height="3.6" fill="#f0f0f0"/>
<text x="536.8" y="799.6" font-family="'Liberation Sans',sans-serif" font-weight="bold" font-size="14.4" text-anchor="middle" fill="#f6f6f6">2</text>
<rect x="547.7" y="796.6" width="1.4" height="3.6" fill="#f0f0f0"/>
<text x="559.8" y="799.6" font-family="'Liberation Sans',sans-serif" font-weight="bold" font-size="14.4" text-anchor="middle" fill="#f6f6f6">3</text>
<rect x="570.4" y="796.6" width="1.4" height="3.6" fill="#f0f0f0"/>
<text x="582.2" y="799.6" font-family="'Liberation Sans',sans-serif" font-weight="bold" font-size="14.4" text-anchor="middle" fill="#f6f6f6">4</text>
<rect x="593.0" y="796.6" width="1.4" height="3.6" fill="#f0f0f0"/>
<text x="605" y="799.6" font-family="'Liberation Sans',sans-serif" font-weight="bold" font-size="14.4" text-anchor="middle" fill="#f6f6f6">5</text>
<rect x="615.6" y="796.6" width="1.4" height="3.6" fill="#f0f0f0"/>
<text x="627.4" y="799.6" font-family="'Liberation Sans',sans-serif" font-weight="bold" font-size="14.4" text-anchor="middle" fill="#f6f6f6">6</text>
</g>
<g>
<rect x="673" y="751.6" width="170" height="53.4" rx="8" fill="#5c7448" opacity=".8" filter="url(#fb1)"/>
<rect x="674" y="752.4" width="168" height="51" rx="7" fill="url(#plateG)"/>
<rect x="674" y="752.4" width="168" height="51" rx="7" fill="#fff" filter="url(#pgrain)" opacity=".3"/>
<use href="#rivet" x="683.2" y="759.4"/>
<use href="#rivet" x="830.6" y="759.2"/>
<use href="#rivet" x="685.4" y="797.2"/>
<use href="#rivet" x="830.0" y="796.6"/>
<text x="756.4" y="765.6" font-family="'Liberation Sans',sans-serif" font-weight="bold" font-size="12.5" text-anchor="middle" fill="#f6f6f6" textLength="131.6" lengthAdjust="spacing">ELEMENT INDICATOR</text>
<rect x="698" y="772" width="117.79999999999995" height="11" rx="5.5" fill="url(#slotG)"/>
<rect x="702" y="776.8" width="109.79999999999995" height="1.6" rx=".8" fill="#2c382a" opacity=".35"/>
<use href="#ptr" x="740.2" y="777.4"/>
<text x="711" y="799.6" font-family="'Liberation Sans',sans-serif" font-weight="bold" font-size="14.4" text-anchor="middle" fill="#f6f6f6">1</text>
<rect x="725.3" y="796.6" width="1.4" height="3.6" fill="#f0f0f0"/>
<text x="740.8" y="799.6" font-family="'Liberation Sans',sans-serif" font-weight="bold" font-size="14.4" text-anchor="middle" fill="#f6f6f6">2</text>
<rect x="755.4" y="796.6" width="1.4" height="3.6" fill="#f0f0f0"/>
<text x="771.2" y="799.6" font-family="'Liberation Sans',sans-serif" font-weight="bold" font-size="14.4" text-anchor="middle" fill="#f6f6f6">3</text>
<rect x="785.7" y="796.6" width="1.4" height="3.6" fill="#f0f0f0"/>
<text x="801.4" y="799.6" font-family="'Liberation Sans',sans-serif" font-weight="bold" font-size="14.4" text-anchor="middle" fill="#f6f6f6">4</text>
</g>
<g id="gauge">
<rect x="855.4" y="766.5" width="61.2" height="153" rx="9" fill="#000"/>
<rect x="860.8" y="775.9" width="20.6" height="2" fill="#f4f4f4"/>
<text x="872.6" y="791.6" font-family="'Liberation Sans',sans-serif" font-weight="bold" font-size="13" text-anchor="middle" fill="#f6f6f6">20</text>
<rect x="860.8" y="835.8" width="20.6" height="2" fill="#f4f4f4"/>
<text x="872.6" y="850.6" font-family="'Liberation Sans',sans-serif" font-weight="bold" font-size="13" text-anchor="middle" fill="#f6f6f6">10</text>
<rect x="860.8" y="894.7" width="20.6" height="2" fill="#f4f4f4"/>
<text x="872.6" y="909.2" font-family="'Liberation Sans',sans-serif" font-weight="bold" font-size="13" text-anchor="middle" fill="#f6f6f6">0</text>
<rect x="890.6" y="801.9" width="20.8" height="2.2" fill="#f4f4f4"/>
<rect x="890.6" y="808.1" width="20.8" height="2.2" fill="#f4f4f4"/>
<rect x="890.6" y="814.3" width="20.8" height="2.2" fill="#f4f4f4"/>
<rect x="890.6" y="820.4" width="20.8" height="2.2" fill="#f4f4f4"/>
<rect x="890.6" y="826.6" width="20.8" height="2.2" fill="#f4f4f4"/>
<rect x="890.6" y="832.8" width="20.8" height="2.2" fill="#f4f4f4"/>
<rect x="890.6" y="839.0" width="20.8" height="2.2" fill="#f4f4f4"/>
<rect x="890.6" y="845.2" width="20.8" height="2.2" fill="#f4f4f4"/>
<rect x="890.6" y="851.3" width="20.8" height="2.2" fill="#f4f4f4"/>
<rect x="890.6" y="857.5" width="20.8" height="2.2" fill="#f4f4f4"/>
<rect x="890.6" y="863.7" width="20.8" height="2.2" fill="#f4f4f4"/>
<rect x="890.6" y="869.9" width="20.8" height="2.2" fill="#f4f4f4"/>
<rect x="890.6" y="876.1" width="20.8" height="2.2" fill="#f4f4f4"/>
<rect x="890.6" y="882.2" width="20.8" height="2.2" fill="#f4f4f4"/>
<rect x="890.6" y="888.4" width="20.8" height="2.2" fill="#f4f4f4"/>
<rect x="890.6" y="894.6" width="20.8" height="2.2" fill="#f4f4f4"/>
</g>
<g font-family="'Liberation Sans',sans-serif" font-size="9" fill="#f2f7ea" stroke="#f2f7ea" stroke-width=".3" text-anchor="end"><text x="8.4" y="790.8">ON</text><text x="10.4" y="834.6">OFF</text><text x="8.4" y="849.6">ON</text><text x="10.4" y="893.2">OFF</text></g>
<path d="M17.8,809.0 L8.7,824.8 L-9.5,824.8 L-18.6,809.0 L-9.5,793.2 L8.7,793.2 Z" fill="#4f6440" opacity=".6" transform="translate(1 1.6)" filter="url(#fb1)"/>
<path d="M17.8,809.0 L8.7,824.8 L-9.5,824.8 L-18.6,809.0 L-9.5,793.2 L8.7,793.2 Z" fill="url(#hexG)" stroke="#c4c6d0" stroke-width="1.2" stroke-linejoin="round"/>
<circle cx="0" cy="809" r="11" fill="#10121a"/>
<path d="M-2,819.6 A11,11 0 0 0 10.4,813" stroke="#a9abb8" stroke-width="1.8" fill="none"/>
<ellipse cx="1" cy="810" rx="2.6" ry="5" fill="#d8d8e4" opacity=".85"/>
<path d="M17.8,867.0 L8.7,882.8 L-9.5,882.8 L-18.6,867.0 L-9.5,851.2 L8.7,851.2 Z" fill="#4f6440" opacity=".6" transform="translate(1 1.6)" filter="url(#fb1)"/>
<path d="M17.8,867.0 L8.7,882.8 L-9.5,882.8 L-18.6,867.0 L-9.5,851.2 L8.7,851.2 Z" fill="url(#hexG)" stroke="#c4c6d0" stroke-width="1.2" stroke-linejoin="round"/>
<circle cx="0" cy="867" r="11" fill="#10121a"/>
<path d="M-2,877.6 A11,11 0 0 0 10.4,871" stroke="#a9abb8" stroke-width="1.8" fill="none"/>
<ellipse cx="1" cy="868" rx="2.6" ry="5" fill="#d8d8e4" opacity=".85"/>
<g id="cablesL" fill="none" stroke-linecap="round">
<circle cx="9" cy="918" r="9" stroke="#4a5e3c" stroke-width="3"/><circle cx="9" cy="918" r="9" stroke="#c8dab4" stroke-width="1"/>
<path d="M-4,901 Q26,910 50,927 Q72,941 120,946 Q150,946 175,936" stroke="#121a16" stroke-width="7"/>
<path d="M-4,910 Q22,918 44,933 Q62,944 110,948" stroke="#141c18" stroke-width="7"/>
<path d="M-4,920 Q20,928 38,941 Q46,948 70,950" stroke="#10180f" stroke-width="7"/>
<path d="M-4,932 Q12,938 26,950" stroke="#121a16" stroke-width="6"/>
<path d="M-4,901 Q26,910 50,927 Q72,941 120,946 Q150,946 175,936" stroke="#3e5a4a" stroke-width="3" transform="translate(0 -0.6)"/>
<path d="M-4,901 Q26,910 50,927 Q72,941 120,946 Q150,946 175,936" stroke="#c4d6cc" stroke-width="1" transform="translate(0.4 -1.4)" opacity=".85"/>
<path d="M-4,910 Q22,918 44,933 Q62,944 110,948" stroke="#3e5a4a" stroke-width="3" transform="translate(0 -0.6)"/>
<path d="M-4,910 Q22,918 44,933 Q62,944 110,948" stroke="#c4d6cc" stroke-width="1" transform="translate(0.4 -1.4)" opacity=".85"/>
<path d="M-4,920 Q20,928 38,941 Q46,948 70,950" stroke="#3e5a4a" stroke-width="3" transform="translate(0 -0.6)"/>
<path d="M-4,920 Q20,928 38,941 Q46,948 70,950" stroke="#c4d6cc" stroke-width="1" transform="translate(0.4 -1.4)" opacity=".85"/>
<path d="M-4,932 Q12,938 26,950" stroke="#3e5a4a" stroke-width="2" transform="translate(0 -0.6)"/>
<path d="M-4,932 Q12,938 26,950" stroke="#c4d6cc" stroke-width="1" transform="translate(0.4 -1.4)" opacity=".85"/>
<path d="M150,942 Q168,926 186,924 L206,926 Q214,934 226,940 Q240,946 256,947 L150,947 Z" fill="#16221b" stroke="none"/>
<path d="M168,930 L204,927 L212,944 L166,945 Z" fill="#2c4336" stroke="none"/>
<path d="M170.0,929.6 L172.0,944.6" stroke="#6f8a7a" stroke-width="1"/>
<path d="M174.4,929.6 L176.4,944.6" stroke="#6f8a7a" stroke-width="1"/>
<path d="M178.8,929.6 L180.8,944.6" stroke="#6f8a7a" stroke-width="1"/>
<path d="M183.2,929.6 L185.2,944.6" stroke="#6f8a7a" stroke-width="1"/>
<path d="M187.6,929.6 L189.6,944.6" stroke="#6f8a7a" stroke-width="1"/>
<path d="M192.0,929.6 L194.0,944.6" stroke="#6f8a7a" stroke-width="1"/>
<path d="M196.4,929.6 L198.4,944.6" stroke="#6f8a7a" stroke-width="1"/>
<path d="M200.8,929.6 L202.8,944.6" stroke="#6f8a7a" stroke-width="1"/>
<path d="M205.2,929.6 L207.2,944.6" stroke="#6f8a7a" stroke-width="1"/>
<path d="M206,927 Q218,936 232,942 Q244,946 262,947" stroke="#0e1612" stroke-width="3"/>
<path d="M208,930 Q220,938 234,943" stroke="#a9bcae" stroke-width=".9"/>
<path d="M120,944 Q150,940 168,931" stroke="#9ab0a0" stroke-width=".9"/>
</g>
<g id="cableBR" fill="none" stroke-linecap="round"><ellipse cx="1015" cy="953" rx="49" ry="26.4" fill="#0b0f0d" stroke="none"/><path d="M972,950 Q992,930.6 1018,930.6 Q1042,931 1060,950" stroke="#2a342e" stroke-width="2"/><path d="M980,950 Q998,936 1018,936 Q1038,936 1052,950" stroke="#c4ccc6" stroke-width="1.1" opacity=".8"/><path d="M990,950 Q1004,941 1018,941 Q1034,941 1044,950" stroke="#7a847e" stroke-width="1"/><path d="M1000,950 Q1010,944.6 1020,944.6 Q1030,944.6 1038,950" stroke="#d8dcd8" stroke-width="1.4" opacity=".9"/></g>
<g id="rborder"><rect x="1272.4" y="0" width="1" height="946" fill="#5a6a50" opacity=".8"/><rect x="1273.3" y="0" width="1.7" height="946" fill="#d8dcd4"/></g>
<rect x="0" y="945.4" width="1275" height="1.4" fill="#dfe6d8"/><rect x="0" y="946.8" width="1275" height="3.2" fill="#0a0a0a"/><!-- WP watermark -->
<g id="wplogo" opacity=".87">
  <defs>
    <clipPath id="wpc1"><path d="M1090,780 H1280 V907.2 L1270.0,907.2 Q1222.4,905.2 1219.4,904.0 Q1216.4,902.7 1212.4,904.2 Q1208.4,905.7 1204.4,905.2 Q1200.4,904.7 1197.9,902.5 Q1195.4,900.2 1192.9,898.0 Q1190.4,895.8 1186.8,895.0 Q1183.2,894.2 1179.6,895.0 Q1176.0,895.8 1173.5,898.0 Q1171.0,900.2 1168.5,902.5 Q1166.0,904.7 1162.0,905.2 Q1158.0,905.7 1154.0,904.2 Q1150.0,902.7 1147.0,904.0 Q1144.0,905.2 1122.0,906.2 L1100.0,907.2 L1090,907.2 Z"/></clipPath>
    <clipPath id="wpc2"><path d="M1090,780 H1280 V899.0 L1270.0,899.0 Q1222.4,897.0 1219.4,895.8 Q1216.4,894.5 1212.4,896.0 Q1208.4,897.5 1204.4,897.0 Q1200.4,896.5 1197.9,894.2 Q1195.4,892.0 1192.9,889.8 Q1190.4,887.6 1186.8,886.8 Q1183.2,886.0 1179.6,886.8 Q1176.0,887.6 1173.5,889.8 Q1171.0,892.0 1168.5,894.2 Q1166.0,896.5 1162.0,897.0 Q1158.0,897.5 1154.0,896.0 Q1150.0,894.5 1147.0,895.8 Q1144.0,897.0 1122.0,898.0 L1100.0,899.0 L1090,899.0 Z"/></clipPath>
  </defs>
  <g fill="#787878">
    <circle cx="1183.2" cy="863.7" r="68.5" clip-path="url(#wpc1)"/>
    <circle cx="1130.2" cy="899.2" r="21.8"/>
    <circle cx="1237.7" cy="898.6" r="21.8"/>
  </g>
  <g fill="#ffc250">
    <path d="M1196.2,804.8 A60.3,60.3 0 1 1 1170.2,804.8 Q1174.2,805.8 1174.8,810.8 Q1175.6,817 1183.2,817.2 Q1190.8,817 1191.6,810.8 Q1192.2,805.8 1196.2,804.8 Z" clip-path="url(#wpc2)"/>
    <circle cx="1130.2" cy="899.2" r="14.0"/>
    <circle cx="1237.7" cy="898.6" r="14.0"/>
  </g>
  <circle cx="1130.2" cy="899.2" r="9.4" fill="#6a98ff"/>
  <circle cx="1237.7" cy="898.6" r="9.4" fill="#6a98ff"/>
  <g transform="translate(1137.4 876.4) scale(.86 1)" font-family="'Liberation Sans',sans-serif" font-size="66" fill="#dcdcdc" stroke="#dcdcdc" stroke-width="5.4" stroke-linejoin="round" stroke-linecap="round">
    <text x="0" y="0" letter-spacing="5">WP</text>
  </g>
</g>
<path d="M1176.8,792 V802.4 A6.4,6.4 0 0 0 1189.6,802.4 V792 Z" fill="#040404"/>

</svg>

</div>
</body>
</html>
